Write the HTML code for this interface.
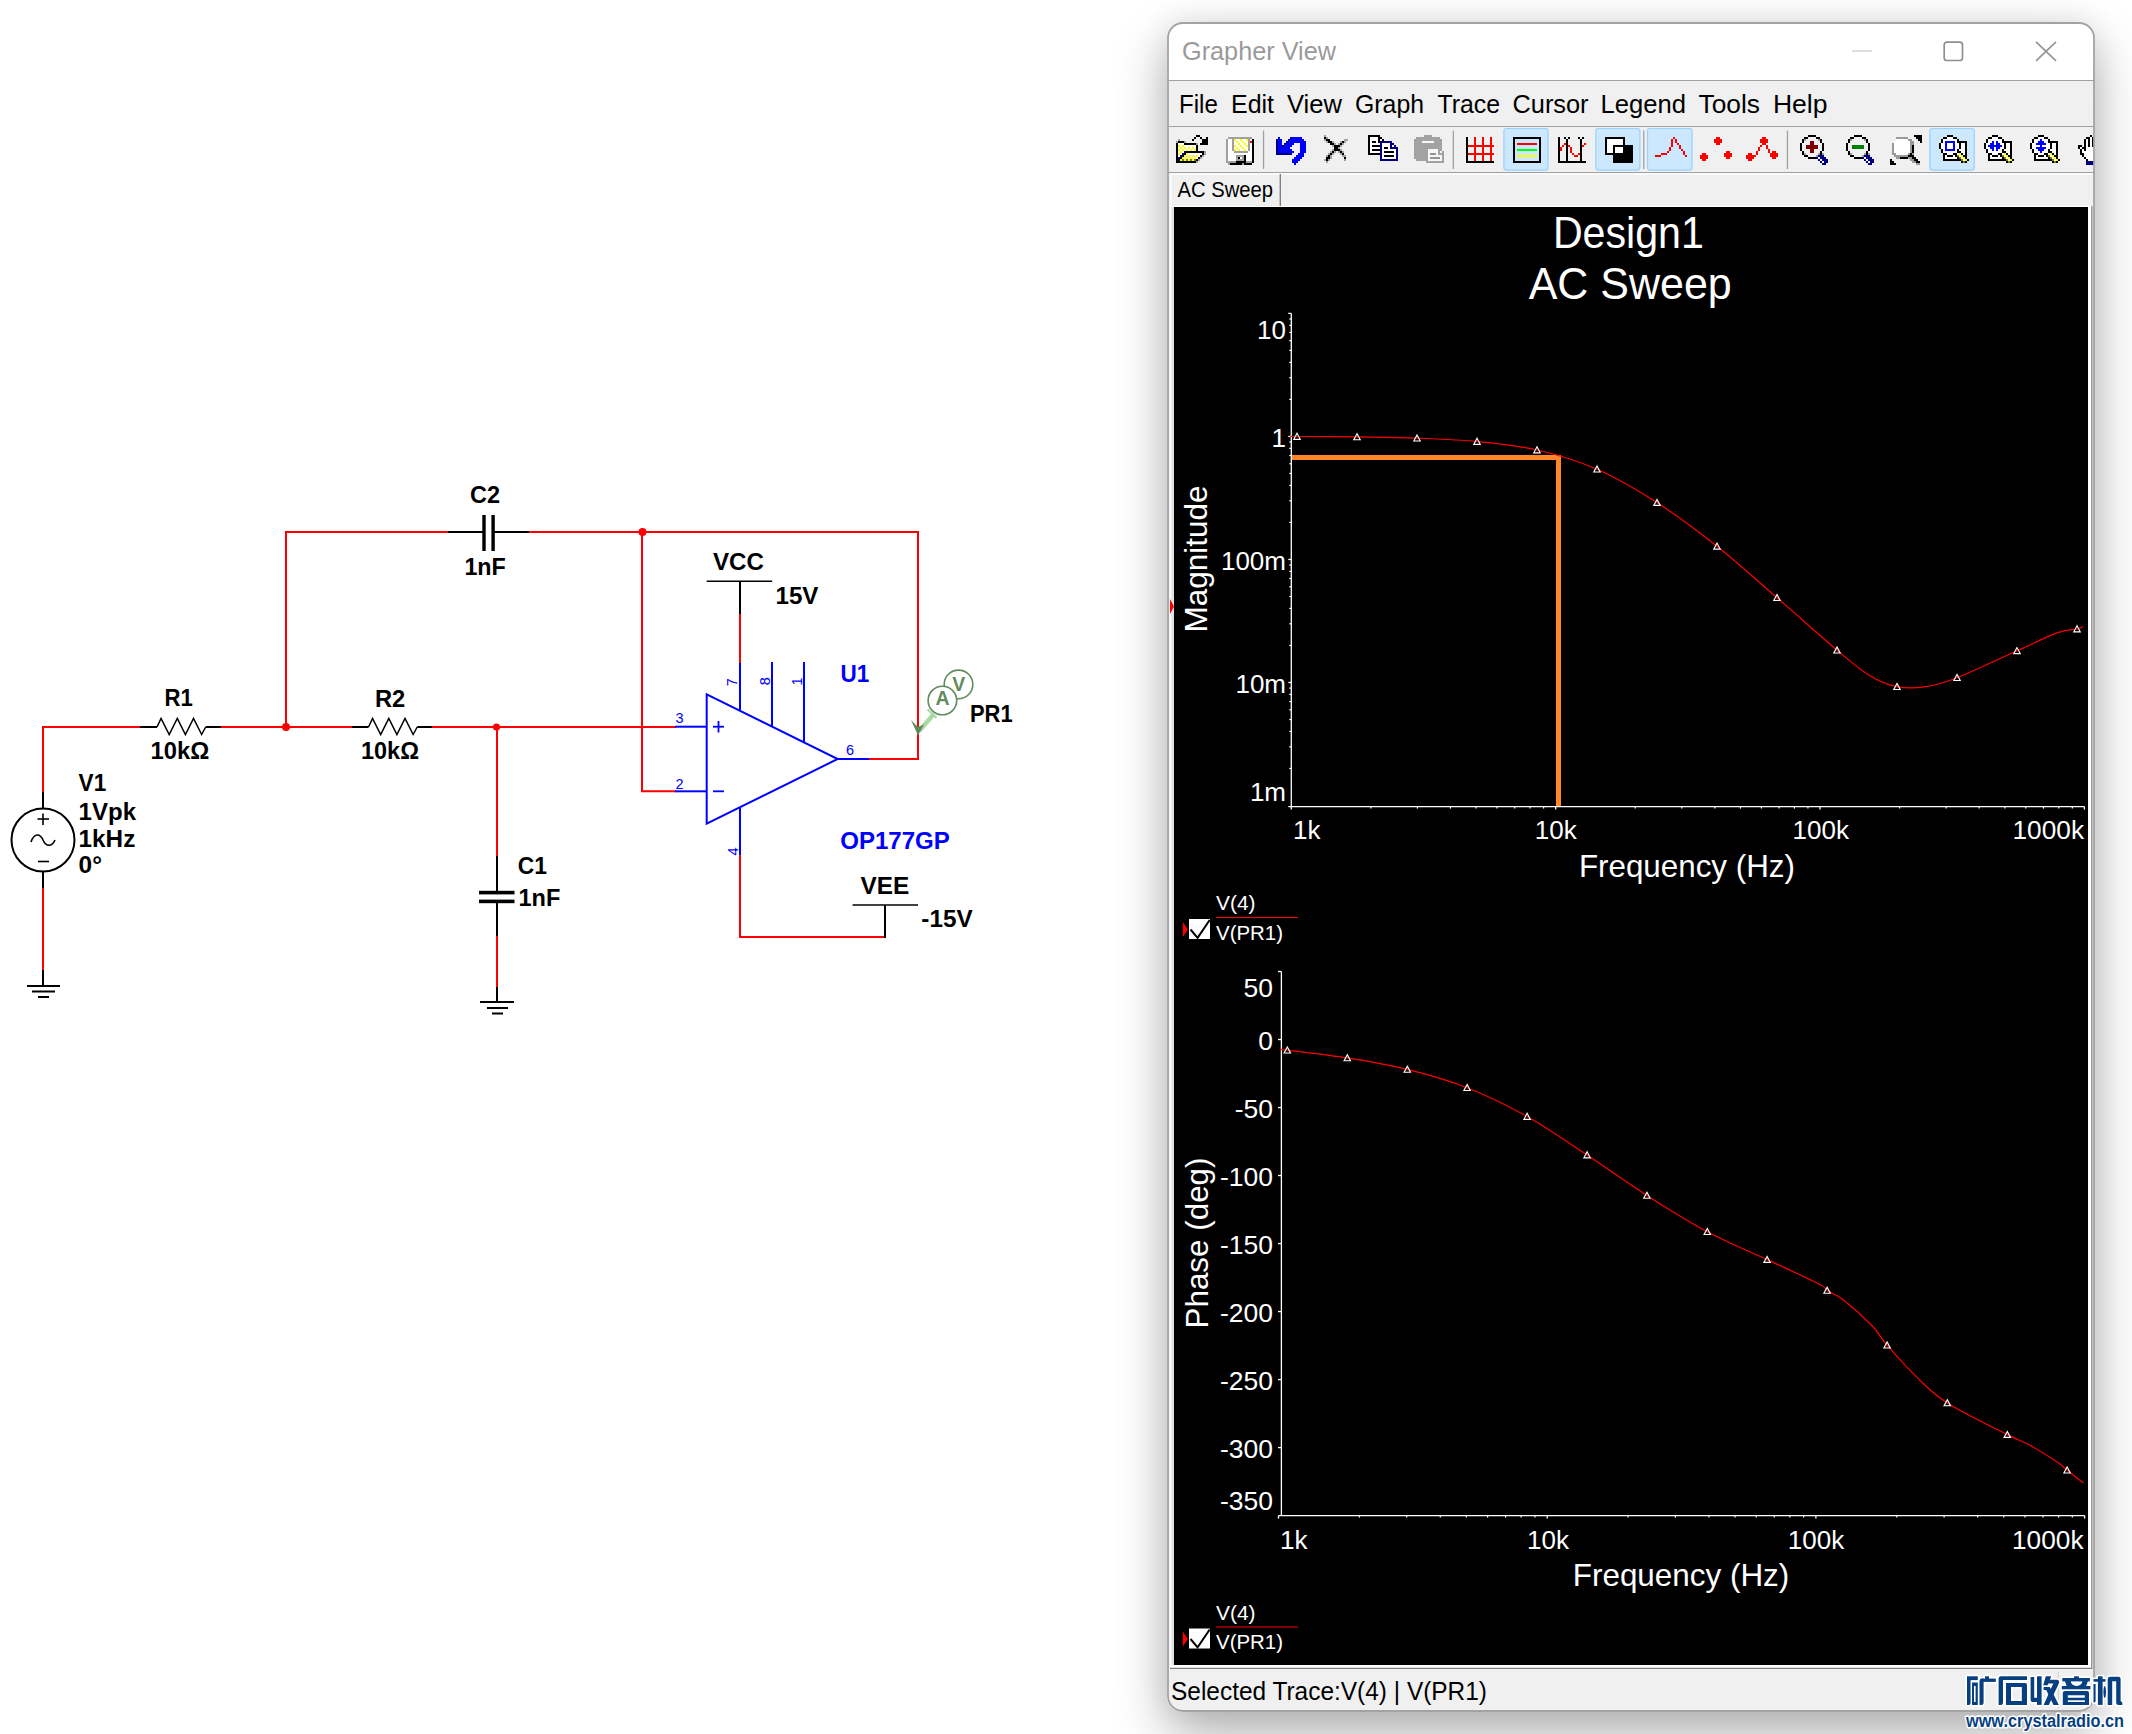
<!DOCTYPE html>
<html><head><meta charset="utf-8"><style>
html,body{margin:0;padding:0;background:#fff;width:2132px;height:1734px;overflow:hidden}
#win{position:absolute;left:1167px;top:22px;width:928px;height:1690px;border-radius:15px;box-shadow:0 22px 52px rgba(0,0,0,0.30),0 0 30px rgba(0,0,0,0.08);background:#f0f0f0}
svg{position:absolute;left:0;top:0}
</style></head><body>
<div id="win"></div>
<svg width="2132" height="1734" viewBox="0 0 2132 1734" shape-rendering="auto">
<g><polyline points="43,793 43,727 141,727" stroke="#ff0000" stroke-width="2" fill="none" />
<line x1="43" y1="792" x2="43" y2="808" stroke="#000" stroke-width="2" />
<circle cx="43" cy="840" r="31.5" fill="none" stroke="#000" stroke-width="2"/>
<line x1="43" y1="872" x2="43" y2="889" stroke="#000" stroke-width="2" />
<line x1="43" y1="888" x2="43" y2="971" stroke="#ff0000" stroke-width="2" />
<line x1="43" y1="970" x2="43" y2="987" stroke="#000" stroke-width="2" />
<line x1="27" y1="986" x2="60" y2="986" stroke="#000" stroke-width="2" />
<line x1="32" y1="991.5" x2="55" y2="991.5" stroke="#000" stroke-width="2" />
<line x1="38" y1="997" x2="49" y2="997" stroke="#000" stroke-width="2" />
<line x1="37.5" y1="819" x2="49" y2="819" stroke="#000" stroke-width="1.6" />
<line x1="43" y1="813.5" x2="43" y2="825" stroke="#000" stroke-width="1.6" />
<line x1="38" y1="861.5" x2="49" y2="861.5" stroke="#000" stroke-width="1.6" />
<path d="M31,842 C34,833 40,833 43,840 C46,847 52,847 55,840" fill="none" stroke="#000" stroke-width="1.6"/>
<line x1="140" y1="727" x2="157" y2="727" stroke="#000" stroke-width="2" />
<polyline points="157,727 161.05833333333334,718.5 169.175,734.5 177.29166666666666,718.5 185.40833333333333,734.5 193.525,718.5 201.64166666666665,734.5 205.7,727" stroke="#000" stroke-width="1.5" fill="none" stroke-linejoin="miter"/>
<line x1="205.7" y1="727" x2="221" y2="727" stroke="#000" stroke-width="2" />
<line x1="351.5" y1="727" x2="368.5" y2="727" stroke="#000" stroke-width="2" />
<polyline points="368.5,727 372.55833333333334,718.5 380.675,734.5 388.7916666666667,718.5 396.90833333333336,734.5 405.025,718.5 413.14166666666665,734.5 417.2,727" stroke="#000" stroke-width="1.5" fill="none" stroke-linejoin="miter"/>
<line x1="417.2" y1="727" x2="432.5" y2="727" stroke="#000" stroke-width="2" />
<line x1="221" y1="727" x2="352" y2="727" stroke="#ff0000" stroke-width="2" />
<line x1="432" y1="727" x2="676" y2="727" stroke="#ff0000" stroke-width="2" />
<polyline points="286,727 286,532 449,532" stroke="#ff0000" stroke-width="2" fill="none" />
<line x1="448" y1="532" x2="483" y2="532" stroke="#000" stroke-width="2" />
<line x1="494" y1="532" x2="530" y2="532" stroke="#000" stroke-width="2" />
<rect x="482.3" y="515" width="3.4" height="36" fill="#000" />
<rect x="491.4" y="515" width="3.4" height="36" fill="#000" />
<polyline points="529,532 918,532 918,759 869,759" stroke="#ff0000" stroke-width="2" fill="none" />
<polyline points="642,532 642,791.3 676,791.3" stroke="#ff0000" stroke-width="2" fill="none" />
<line x1="497" y1="727" x2="497" y2="857" stroke="#ff0000" stroke-width="2" />
<line x1="497" y1="856" x2="497" y2="893" stroke="#000" stroke-width="2" />
<line x1="497" y1="900" x2="497" y2="937" stroke="#000" stroke-width="2" />
<rect x="479" y="890.8" width="35.5" height="3.6" fill="#000" />
<rect x="479" y="899.6" width="35.5" height="3.6" fill="#000" />
<line x1="497" y1="936" x2="497" y2="988" stroke="#ff0000" stroke-width="2" />
<line x1="497" y1="987" x2="497" y2="1002" stroke="#000" stroke-width="2" />
<line x1="480" y1="1002" x2="514" y2="1002" stroke="#000" stroke-width="2" />
<line x1="487" y1="1008" x2="508" y2="1008" stroke="#000" stroke-width="2" />
<line x1="492" y1="1013.5" x2="503" y2="1013.5" stroke="#000" stroke-width="2" />
<circle cx="286" cy="727" r="4" fill="#ff0000"/>
<circle cx="496.5" cy="727" r="3.6" fill="#ff0000"/>
<circle cx="642.5" cy="532" r="4" fill="#ff0000"/>
<polygon points="706.7,694.4 706.7,823.6 837.7,759" fill="none" stroke="#0000ff" stroke-width="2"/>
<line x1="675" y1="726.7" x2="706.7" y2="726.7" stroke="#0000ff" stroke-width="2" />
<line x1="675" y1="791.3" x2="706.7" y2="791.3" stroke="#0000ff" stroke-width="2" />
<line x1="837" y1="759" x2="869" y2="759" stroke="#0000ff" stroke-width="2" />
<line x1="740" y1="662" x2="740" y2="710.8212213740458" stroke="#0000ff" stroke-width="2" />
<line x1="772" y1="662" x2="772" y2="726.6013740458015" stroke="#0000ff" stroke-width="2" />
<line x1="804" y1="662" x2="804" y2="742.3815267175572" stroke="#0000ff" stroke-width="2" />
<line x1="740" y1="807.1787786259542" x2="740" y2="856" stroke="#0000ff" stroke-width="2" />
<line x1="740" y1="613" x2="740" y2="663" stroke="#ff0000" stroke-width="2" />
<line x1="740" y1="581" x2="740" y2="614" stroke="#000" stroke-width="2" />
<line x1="706.7" y1="581.3" x2="772.2" y2="581.3" stroke="#000" stroke-width="1.5" />
<polyline points="740,855 740,937 886,937" stroke="#ff0000" stroke-width="2" fill="none" />
<line x1="885" y1="938" x2="885" y2="905" stroke="#000" stroke-width="2" />
<line x1="852.6" y1="905" x2="918" y2="905" stroke="#000" stroke-width="1.5" />
<line x1="713" y1="726.7" x2="724" y2="726.7" stroke="#0000ff" stroke-width="1.8" />
<line x1="718.5" y1="721" x2="718.5" y2="732.5" stroke="#0000ff" stroke-width="1.8" />
<line x1="713" y1="791.3" x2="724" y2="791.3" stroke="#0000ff" stroke-width="1.8" />
<line x1="919" y1="731" x2="934" y2="714" stroke="#a9d8a3" stroke-width="4.5"/>
<line x1="927.5" y1="709.5" x2="936.5" y2="718" stroke="#a9d8a3" stroke-width="2"/>
<polygon points="911,720 918,735.5 924,724.5 918,727" fill="#5f8c5f"/>
<circle cx="958.5" cy="684.4" r="14.3" fill="#fff" stroke="#5f8c5f" stroke-width="1.6"/>
<circle cx="942.4" cy="700.5" r="14.3" fill="#fff" stroke="#5f8c5f" stroke-width="1.6"/>
<text x="958.7" y="691.2" font-family="Liberation Sans" font-size="19.5" font-weight="bold" fill="#5f8c5f" text-anchor="middle" >V</text>
<text x="942.6" y="705.2" font-family="Liberation Sans" font-size="19.5" font-weight="bold" fill="#5f8c5f" text-anchor="middle" >A</text>
<text x="470" y="503.2" font-family="Liberation Sans" font-size="23" font-weight="bold" fill="#000" text-anchor="start" textLength="30" lengthAdjust="spacingAndGlyphs" >C2</text>
<text x="464.4" y="575" font-family="Liberation Sans" font-size="23" font-weight="bold" fill="#000" text-anchor="start" textLength="41.4" lengthAdjust="spacingAndGlyphs" >1nF</text>
<text x="164.4" y="706.3" font-family="Liberation Sans" font-size="23" font-weight="bold" fill="#000" text-anchor="start" textLength="28.3" lengthAdjust="spacingAndGlyphs" >R1</text>
<text x="150.6" y="758.9" font-family="Liberation Sans" font-size="23" font-weight="bold" fill="#000" text-anchor="start" textLength="58.7" lengthAdjust="spacingAndGlyphs" >10kΩ</text>
<text x="375" y="707" font-family="Liberation Sans" font-size="23" font-weight="bold" fill="#000" text-anchor="start" textLength="30.3" lengthAdjust="spacingAndGlyphs" >R2</text>
<text x="361" y="759.2" font-family="Liberation Sans" font-size="23" font-weight="bold" fill="#000" text-anchor="start" textLength="58" lengthAdjust="spacingAndGlyphs" >10kΩ</text>
<text x="78.6" y="790.7" font-family="Liberation Sans" font-size="23" font-weight="bold" fill="#000" text-anchor="start" textLength="27.6" lengthAdjust="spacingAndGlyphs" >V1</text>
<text x="78.6" y="819.8" font-family="Liberation Sans" font-size="23" font-weight="bold" fill="#000" text-anchor="start" textLength="57.4" lengthAdjust="spacingAndGlyphs" >1Vpk</text>
<text x="78.6" y="846.8" font-family="Liberation Sans" font-size="23" font-weight="bold" fill="#000" text-anchor="start" textLength="56.7" lengthAdjust="spacingAndGlyphs" >1kHz</text>
<text x="78.6" y="873" font-family="Liberation Sans" font-size="23" font-weight="bold" fill="#000" text-anchor="start" textLength="23.4" lengthAdjust="spacingAndGlyphs" >0°</text>
<text x="713" y="569.8" font-family="Liberation Sans" font-size="23" font-weight="bold" fill="#000" text-anchor="start" textLength="51" lengthAdjust="spacingAndGlyphs" >VCC</text>
<text x="775.5" y="604" font-family="Liberation Sans" font-size="23" font-weight="bold" fill="#000" text-anchor="start" textLength="43" lengthAdjust="spacingAndGlyphs" >15V</text>
<text x="517.8" y="873.5" font-family="Liberation Sans" font-size="23" font-weight="bold" fill="#000" text-anchor="start" textLength="29.2" lengthAdjust="spacingAndGlyphs" >C1</text>
<text x="518.5" y="906.4" font-family="Liberation Sans" font-size="23" font-weight="bold" fill="#000" text-anchor="start" textLength="41.8" lengthAdjust="spacingAndGlyphs" >1nF</text>
<text x="860.5" y="893.7" font-family="Liberation Sans" font-size="23" font-weight="bold" fill="#000" text-anchor="start" textLength="48.8" lengthAdjust="spacingAndGlyphs" >VEE</text>
<text x="921.3" y="927.2" font-family="Liberation Sans" font-size="23" font-weight="bold" fill="#000" text-anchor="start" textLength="51.3" lengthAdjust="spacingAndGlyphs" >-15V</text>
<text x="970" y="721.9" font-family="Liberation Sans" font-size="23" font-weight="bold" fill="#000" text-anchor="start" textLength="42.6" lengthAdjust="spacingAndGlyphs" >PR1</text>
<text x="840.4" y="682.4" font-family="Liberation Sans" font-size="23" font-weight="bold" fill="#0000ff" text-anchor="start" textLength="28.8" lengthAdjust="spacingAndGlyphs" >U1</text>
<text x="840.2" y="848.6" font-family="Liberation Sans" font-size="23" font-weight="bold" fill="#0000ff" text-anchor="start" textLength="109.7" lengthAdjust="spacingAndGlyphs" >OP177GP</text>
<text x="675.5" y="723.4" font-family="Liberation Sans" font-size="14.5" font-weight="normal" fill="#0000ff" text-anchor="start" >3</text>
<text x="675.5" y="788.5" font-family="Liberation Sans" font-size="14.5" font-weight="normal" fill="#0000ff" text-anchor="start" >2</text>
<text x="846" y="755" font-family="Liberation Sans" font-size="14.5" font-weight="normal" fill="#0000ff" text-anchor="start" >6</text>
<text x="0" y="0" font-family="Liberation Sans" font-size="14.5" fill="#0000ff" transform="translate(737,686.3) rotate(-90)">7</text>
<text x="0" y="0" font-family="Liberation Sans" font-size="14.5" fill="#0000ff" transform="translate(769.5,685.3) rotate(-90)">8</text>
<text x="0" y="0" font-family="Liberation Sans" font-size="14.5" fill="#0000ff" transform="translate(801.8,685.5) rotate(-90)">1</text>
<text x="0" y="0" font-family="Liberation Sans" font-size="14.5" fill="#0000ff" transform="translate(737.5,855.5) rotate(-90)">4</text></g>
<defs><clipPath id="wc"><rect x="1168" y="23" width="926" height="1688" rx="15"/></clipPath></defs>
<g clip-path="url(#wc)"><rect x="1168" y="23" width="926" height="57" fill="#ffffff" />
<rect x="1168" y="80" width="926" height="1630" fill="#f0f0f0" />
<line x1="1168" y1="80.5" x2="2094" y2="80.5" stroke="#a0a0a0" stroke-width="1" />
<text x="1182" y="59.8" font-family="Liberation Sans" font-size="25" font-weight="normal" fill="#9a9a9a" text-anchor="start" textLength="154" lengthAdjust="spacingAndGlyphs" >Grapher View</text>
<line x1="1852" y1="51" x2="1872" y2="51" stroke="#d4d4d4" stroke-width="1.4" />
<rect x="1944.2" y="42.2" width="18.3" height="18.3" rx="2.8" fill="none" stroke="#909090" stroke-width="1.7"/>
<line x1="2036" y1="41.8" x2="2056" y2="60.8" stroke="#959595" stroke-width="1.7" />
<line x1="2056" y1="41.8" x2="2036" y2="60.8" stroke="#959595" stroke-width="1.7" />
<text x="1179" y="113.3" font-family="Liberation Sans" font-size="26" font-weight="normal" fill="#000" text-anchor="start" textLength="38.8" lengthAdjust="spacingAndGlyphs" >File</text>
<text x="1231" y="113.3" font-family="Liberation Sans" font-size="26" font-weight="normal" fill="#000" text-anchor="start" textLength="43" lengthAdjust="spacingAndGlyphs" >Edit</text>
<text x="1287" y="113.3" font-family="Liberation Sans" font-size="26" font-weight="normal" fill="#000" text-anchor="start" textLength="55" lengthAdjust="spacingAndGlyphs" >View</text>
<text x="1355" y="113.3" font-family="Liberation Sans" font-size="26" font-weight="normal" fill="#000" text-anchor="start" textLength="69" lengthAdjust="spacingAndGlyphs" >Graph</text>
<text x="1437.5" y="113.3" font-family="Liberation Sans" font-size="26" font-weight="normal" fill="#000" text-anchor="start" textLength="62.5" lengthAdjust="spacingAndGlyphs" >Trace</text>
<text x="1512.5" y="113.3" font-family="Liberation Sans" font-size="26" font-weight="normal" fill="#000" text-anchor="start" textLength="76" lengthAdjust="spacingAndGlyphs" >Cursor</text>
<text x="1600.5" y="113.3" font-family="Liberation Sans" font-size="26" font-weight="normal" fill="#000" text-anchor="start" textLength="85.5" lengthAdjust="spacingAndGlyphs" >Legend</text>
<text x="1698.5" y="113.3" font-family="Liberation Sans" font-size="26" font-weight="normal" fill="#000" text-anchor="start" textLength="61.4" lengthAdjust="spacingAndGlyphs" >Tools</text>
<text x="1772.9" y="113.3" font-family="Liberation Sans" font-size="26" font-weight="normal" fill="#000" text-anchor="start" textLength="54.6" lengthAdjust="spacingAndGlyphs" >Help</text>
<line x1="1168" y1="126.5" x2="2094" y2="126.5" stroke="#a0a0a0" stroke-width="1" />
<line x1="1168" y1="172.5" x2="2094" y2="172.5" stroke="#a0a0a0" stroke-width="1" />
<line x1="1170" y1="173.8" x2="2092" y2="173.8" stroke="#ffffff" stroke-width="1.2" />
<line x1="1170.8" y1="174" x2="1170.8" y2="207" stroke="#ffffff" stroke-width="1.2" />
<line x1="1280.3" y1="174" x2="1280.3" y2="206" stroke="#808080" stroke-width="1.4" />
<text x="1177.5" y="196.8" font-family="Liberation Sans" font-size="22.5" font-weight="normal" fill="#000" text-anchor="start" textLength="95.5" lengthAdjust="spacingAndGlyphs" >AC Sweep</text>
<rect x="1170" y="206" width="922" height="1462" fill="#ffffff" />
<rect x="1171.3" y="207" width="2.7" height="1458" fill="#e2e2e2" />
<rect x="1174" y="207" width="914" height="1458" fill="#000000" />
<line x1="2091.8" y1="206" x2="2091.8" y2="1669" stroke="#808080" stroke-width="1.2" />
<line x1="1170" y1="1668.3" x2="2092" y2="1668.3" stroke="#808080" stroke-width="1.2" />
<text x="1171" y="1700" font-family="Liberation Sans" font-size="25.8" font-weight="normal" fill="#000" text-anchor="start" textLength="316" lengthAdjust="spacingAndGlyphs" >Selected Trace:V(4) | V(PR1)</text>
<line x1="2058.4" y1="1672" x2="2058.4" y2="1709" stroke="#d2d2d2" stroke-width="1" />
<text x="1628.4" y="248.3" font-family="Liberation Sans" font-size="44" font-weight="normal" fill="#ffffff" text-anchor="middle" textLength="151" lengthAdjust="spacingAndGlyphs" >Design1</text>
<text x="1630.2" y="298.9" font-family="Liberation Sans" font-size="44" font-weight="normal" fill="#ffffff" text-anchor="middle" textLength="203" lengthAdjust="spacingAndGlyphs" >AC Sweep</text>
<line x1="1291.3" y1="313.4" x2="1291.3" y2="809.6" stroke="#ffffff" stroke-width="1.3" />
<line x1="1288.3" y1="806.6" x2="2084.4" y2="806.6" stroke="#ffffff" stroke-width="1.3" />
<line x1="1288.3" y1="313.4" x2="1291.3" y2="313.4" stroke="#ffffff" stroke-width="1.3" />
<line x1="1289.3" y1="399.3942796334603" x2="1291.3" y2="399.3942796334603" stroke="#ffffff" stroke-width="1.2" />
<line x1="1289.3" y1="377.7297720318399" x2="1291.3" y2="377.7297720318399" stroke="#ffffff" stroke-width="1.2" />
<line x1="1289.3" y1="362.35855926692074" x2="1291.3" y2="362.35855926692074" stroke="#ffffff" stroke-width="1.2" />
<line x1="1289.3" y1="350.43572036653956" x2="1291.3" y2="350.43572036653956" stroke="#ffffff" stroke-width="1.2" />
<line x1="1289.3" y1="340.69405166530026" x2="1291.3" y2="340.69405166530026" stroke="#ffffff" stroke-width="1.2" />
<line x1="1289.3" y1="332.45758813704595" x2="1291.3" y2="332.45758813704595" stroke="#ffffff" stroke-width="1.2" />
<line x1="1289.3" y1="325.32283890038116" x2="1291.3" y2="325.32283890038116" stroke="#ffffff" stroke-width="1.2" />
<line x1="1289.3" y1="319.0295440636798" x2="1291.3" y2="319.0295440636798" stroke="#ffffff" stroke-width="1.2" />
<line x1="1288.3" y1="436.42999999999995" x2="1291.3" y2="436.42999999999995" stroke="#ffffff" stroke-width="1.3" />
<line x1="1289.3" y1="522.4242796334604" x2="1291.3" y2="522.4242796334604" stroke="#ffffff" stroke-width="1.2" />
<line x1="1289.3" y1="500.75977203184" x2="1291.3" y2="500.75977203184" stroke="#ffffff" stroke-width="1.2" />
<line x1="1289.3" y1="485.3885592669208" x2="1291.3" y2="485.3885592669208" stroke="#ffffff" stroke-width="1.2" />
<line x1="1289.3" y1="473.46572036653964" x2="1291.3" y2="473.46572036653964" stroke="#ffffff" stroke-width="1.2" />
<line x1="1289.3" y1="463.72405166530035" x2="1291.3" y2="463.72405166530035" stroke="#ffffff" stroke-width="1.2" />
<line x1="1289.3" y1="455.48758813704603" x2="1291.3" y2="455.48758813704603" stroke="#ffffff" stroke-width="1.2" />
<line x1="1289.3" y1="448.35283890038124" x2="1291.3" y2="448.35283890038124" stroke="#ffffff" stroke-width="1.2" />
<line x1="1289.3" y1="442.0595440636799" x2="1291.3" y2="442.0595440636799" stroke="#ffffff" stroke-width="1.2" />
<line x1="1288.3" y1="559.46" x2="1291.3" y2="559.46" stroke="#ffffff" stroke-width="1.3" />
<line x1="1289.3" y1="645.4542796334604" x2="1291.3" y2="645.4542796334604" stroke="#ffffff" stroke-width="1.2" />
<line x1="1289.3" y1="623.7897720318399" x2="1291.3" y2="623.7897720318399" stroke="#ffffff" stroke-width="1.2" />
<line x1="1289.3" y1="608.4185592669207" x2="1291.3" y2="608.4185592669207" stroke="#ffffff" stroke-width="1.2" />
<line x1="1289.3" y1="596.4957203665397" x2="1291.3" y2="596.4957203665397" stroke="#ffffff" stroke-width="1.2" />
<line x1="1289.3" y1="586.7540516653004" x2="1291.3" y2="586.7540516653004" stroke="#ffffff" stroke-width="1.2" />
<line x1="1289.3" y1="578.517588137046" x2="1291.3" y2="578.517588137046" stroke="#ffffff" stroke-width="1.2" />
<line x1="1289.3" y1="571.3828389003812" x2="1291.3" y2="571.3828389003812" stroke="#ffffff" stroke-width="1.2" />
<line x1="1289.3" y1="565.0895440636799" x2="1291.3" y2="565.0895440636799" stroke="#ffffff" stroke-width="1.2" />
<line x1="1288.3" y1="682.49" x2="1291.3" y2="682.49" stroke="#ffffff" stroke-width="1.3" />
<line x1="1289.3" y1="768.4842796334603" x2="1291.3" y2="768.4842796334603" stroke="#ffffff" stroke-width="1.2" />
<line x1="1289.3" y1="746.8197720318399" x2="1291.3" y2="746.8197720318399" stroke="#ffffff" stroke-width="1.2" />
<line x1="1289.3" y1="731.4485592669207" x2="1291.3" y2="731.4485592669207" stroke="#ffffff" stroke-width="1.2" />
<line x1="1289.3" y1="719.5257203665396" x2="1291.3" y2="719.5257203665396" stroke="#ffffff" stroke-width="1.2" />
<line x1="1289.3" y1="709.7840516653004" x2="1291.3" y2="709.7840516653004" stroke="#ffffff" stroke-width="1.2" />
<line x1="1289.3" y1="701.547588137046" x2="1291.3" y2="701.547588137046" stroke="#ffffff" stroke-width="1.2" />
<line x1="1289.3" y1="694.4128389003812" x2="1291.3" y2="694.4128389003812" stroke="#ffffff" stroke-width="1.2" />
<line x1="1289.3" y1="688.1195440636799" x2="1291.3" y2="688.1195440636799" stroke="#ffffff" stroke-width="1.2" />
<line x1="1370.8822965203678" y1="806.6" x2="1370.8822965203678" y2="808.6" stroke="#ffffff" stroke-width="1.2" />
<line x1="1417.4349557060548" y1="806.6" x2="1417.4349557060548" y2="808.6" stroke="#ffffff" stroke-width="1.2" />
<line x1="1450.4645930407357" y1="806.6" x2="1450.4645930407357" y2="808.6" stroke="#ffffff" stroke-width="1.2" />
<line x1="1476.0843701462989" y1="806.6" x2="1476.0843701462989" y2="808.6" stroke="#ffffff" stroke-width="1.2" />
<line x1="1497.0172522264227" y1="806.6" x2="1497.0172522264227" y2="808.6" stroke="#ffffff" stroke-width="1.2" />
<line x1="1514.7157518451024" y1="806.6" x2="1514.7157518451024" y2="808.6" stroke="#ffffff" stroke-width="1.2" />
<line x1="1530.0468895611034" y1="806.6" x2="1530.0468895611034" y2="808.6" stroke="#ffffff" stroke-width="1.2" />
<line x1="1543.5699114121096" y1="806.6" x2="1543.5699114121096" y2="808.6" stroke="#ffffff" stroke-width="1.2" />
<line x1="1555.6666666666667" y1="806.6" x2="1555.6666666666667" y2="809.6" stroke="#ffffff" stroke-width="1.3" />
<line x1="1635.2489631870346" y1="806.6" x2="1635.2489631870346" y2="808.6" stroke="#ffffff" stroke-width="1.2" />
<line x1="1681.8016223727216" y1="806.6" x2="1681.8016223727216" y2="808.6" stroke="#ffffff" stroke-width="1.2" />
<line x1="1714.8312597074025" y1="806.6" x2="1714.8312597074025" y2="808.6" stroke="#ffffff" stroke-width="1.2" />
<line x1="1740.4510368129656" y1="806.6" x2="1740.4510368129656" y2="808.6" stroke="#ffffff" stroke-width="1.2" />
<line x1="1761.3839188930895" y1="806.6" x2="1761.3839188930895" y2="808.6" stroke="#ffffff" stroke-width="1.2" />
<line x1="1779.0824185117692" y1="806.6" x2="1779.0824185117692" y2="808.6" stroke="#ffffff" stroke-width="1.2" />
<line x1="1794.4135562277702" y1="806.6" x2="1794.4135562277702" y2="808.6" stroke="#ffffff" stroke-width="1.2" />
<line x1="1807.9365780787764" y1="806.6" x2="1807.9365780787764" y2="808.6" stroke="#ffffff" stroke-width="1.2" />
<line x1="1820.0333333333333" y1="806.6" x2="1820.0333333333333" y2="809.6" stroke="#ffffff" stroke-width="1.3" />
<line x1="1899.6156298537012" y1="806.6" x2="1899.6156298537012" y2="808.6" stroke="#ffffff" stroke-width="1.2" />
<line x1="1946.1682890393881" y1="806.6" x2="1946.1682890393881" y2="808.6" stroke="#ffffff" stroke-width="1.2" />
<line x1="1979.197926374069" y1="806.6" x2="1979.197926374069" y2="808.6" stroke="#ffffff" stroke-width="1.2" />
<line x1="2004.8177034796322" y1="806.6" x2="2004.8177034796322" y2="808.6" stroke="#ffffff" stroke-width="1.2" />
<line x1="2025.750585559756" y1="806.6" x2="2025.750585559756" y2="808.6" stroke="#ffffff" stroke-width="1.2" />
<line x1="2043.4490851784358" y1="806.6" x2="2043.4490851784358" y2="808.6" stroke="#ffffff" stroke-width="1.2" />
<line x1="2058.780222894437" y1="806.6" x2="2058.780222894437" y2="808.6" stroke="#ffffff" stroke-width="1.2" />
<line x1="2072.303244745443" y1="806.6" x2="2072.303244745443" y2="808.6" stroke="#ffffff" stroke-width="1.2" />
<line x1="2084.4" y1="806.6" x2="2084.4" y2="809.6" stroke="#ffffff" stroke-width="1.3" />
<text x="1286" y="338.7" font-family="Liberation Sans" font-size="26" font-weight="normal" fill="#ffffff" text-anchor="end" >10</text>
<text x="1286" y="446.7" font-family="Liberation Sans" font-size="26" font-weight="normal" fill="#ffffff" text-anchor="end" >1</text>
<text x="1286" y="569.5" font-family="Liberation Sans" font-size="26" font-weight="normal" fill="#ffffff" text-anchor="end" >100m</text>
<text x="1286" y="692.9" font-family="Liberation Sans" font-size="26" font-weight="normal" fill="#ffffff" text-anchor="end" >10m</text>
<text x="1286" y="800.7" font-family="Liberation Sans" font-size="26" font-weight="normal" fill="#ffffff" text-anchor="end" >1m</text>
<text x="1293" y="838.8" font-family="Liberation Sans" font-size="26" font-weight="normal" fill="#ffffff" text-anchor="start" >1k</text>
<text x="1555.8" y="838.8" font-family="Liberation Sans" font-size="26" font-weight="normal" fill="#ffffff" text-anchor="middle" >10k</text>
<text x="1820.8" y="838.8" font-family="Liberation Sans" font-size="26" font-weight="normal" fill="#ffffff" text-anchor="middle" >100k</text>
<text x="2084" y="838.8" font-family="Liberation Sans" font-size="26" font-weight="normal" fill="#ffffff" text-anchor="end" textLength="71.5" lengthAdjust="spacingAndGlyphs" >1000k</text>
<text x="1686.9" y="876.8" font-family="Liberation Sans" font-size="31.5" font-weight="normal" fill="#ffffff" text-anchor="middle" textLength="216" lengthAdjust="spacingAndGlyphs" >Frequency (Hz)</text>
<text x="0" y="0" font-family="Liberation Sans" font-size="32" fill="#ffffff" text-anchor="middle" textLength="147" lengthAdjust="spacingAndGlyphs" transform="translate(1207,559) rotate(-90)">Magnitude</text>
<rect x="1292" y="455" width="268" height="5" fill="#ff8629" />
<rect x="1556" y="455" width="5" height="351" fill="#ff8629" />
<path d="M1292,436.5 C1292.83,436.50 1286.17,436.43 1297,436.5 C1307.83,436.57 1337.00,436.62 1357,436.9 C1377.00,437.18 1397.00,437.43 1417,438.2 C1437.00,438.97 1457.00,439.53 1477,441.5 C1497.00,443.47 1517.00,445.38 1537,450 C1557.00,454.62 1577.00,460.43 1597,469.2 C1617.00,477.97 1637.00,489.75 1657,502.6 C1677.00,515.45 1697.00,530.45 1717,546.3 C1737.00,562.15 1757.00,580.38 1777,597.7 C1797.00,615.02 1821.67,637.28 1837,650.2 C1852.33,663.12 1859.00,669.12 1869,675.2 C1879.00,681.28 1887.50,684.78 1897,686.7 C1906.50,688.62 1916.00,688.20 1926,686.7 C1936.00,685.20 1941.83,683.68 1957,677.7 C1972.17,671.72 2000.33,658.27 2017,650.8 C2033.67,643.33 2047.00,636.53 2057,632.9 C2067.00,629.27 2072.67,630.07 2077,629 C2081.33,627.93 2082.00,626.92 2083,626.5" fill="none" stroke="#ff0000" stroke-width="1.2"/>
<polygon points="1297,433.3 1293.8,439.3 1300.2,439.3" fill="none" stroke="#fff" stroke-width="1.15"/>
<polygon points="1357,433.7 1353.8,439.7 1360.2,439.7" fill="none" stroke="#fff" stroke-width="1.15"/>
<polygon points="1417,435.0 1413.8,441.0 1420.2,441.0" fill="none" stroke="#fff" stroke-width="1.15"/>
<polygon points="1477,438.3 1473.8,444.3 1480.2,444.3" fill="none" stroke="#fff" stroke-width="1.15"/>
<polygon points="1537,446.8 1533.8,452.8 1540.2,452.8" fill="none" stroke="#fff" stroke-width="1.15"/>
<polygon points="1597,466.0 1593.8,472.0 1600.2,472.0" fill="none" stroke="#fff" stroke-width="1.15"/>
<polygon points="1657,499.40000000000003 1653.8,505.40000000000003 1660.2,505.40000000000003" fill="none" stroke="#fff" stroke-width="1.15"/>
<polygon points="1717,543.0999999999999 1713.8,549.0999999999999 1720.2,549.0999999999999" fill="none" stroke="#fff" stroke-width="1.15"/>
<polygon points="1777,594.5 1773.8,600.5 1780.2,600.5" fill="none" stroke="#fff" stroke-width="1.15"/>
<polygon points="1837,647.0 1833.8,653.0 1840.2,653.0" fill="none" stroke="#fff" stroke-width="1.15"/>
<polygon points="1897,683.5 1893.8,689.5 1900.2,689.5" fill="none" stroke="#fff" stroke-width="1.15"/>
<polygon points="1957,674.5 1953.8,680.5 1960.2,680.5" fill="none" stroke="#fff" stroke-width="1.15"/>
<polygon points="2017,647.5999999999999 2013.8,653.5999999999999 2020.2,653.5999999999999" fill="none" stroke="#fff" stroke-width="1.15"/>
<polygon points="2077,625.8 2073.8,631.8 2080.2,631.8" fill="none" stroke="#fff" stroke-width="1.15"/>
<text x="1216" y="910.2" font-family="Liberation Sans" font-size="21" font-weight="normal" fill="#ffffff" text-anchor="start" textLength="39.5" lengthAdjust="spacingAndGlyphs" >V(4)</text>
<line x1="1216" y1="917.5" x2="1298" y2="917.5" stroke="#ff0000" stroke-width="1.2" />
<rect x="1189" y="919" width="21" height="20" fill="#fff" />
<polyline points="1190.5,929.5 1197.6,937.8 1209.7,920" stroke="#000" stroke-width="2" fill="none" />
<polygon points="1182.8,922 1187.8,929.5 1182.8,937" fill="#ff0000"/>
<text x="1216" y="939.8" font-family="Liberation Sans" font-size="21" font-weight="normal" fill="#ffffff" text-anchor="start" textLength="67" lengthAdjust="spacingAndGlyphs" >V(PR1)</text>
<text x="1216" y="1619.7" font-family="Liberation Sans" font-size="21" font-weight="normal" fill="#ffffff" text-anchor="start" textLength="39.5" lengthAdjust="spacingAndGlyphs" >V(4)</text>
<line x1="1216" y1="1627.0" x2="1298" y2="1627.0" stroke="#ff0000" stroke-width="1.2" />
<rect x="1189" y="1628.5" width="21" height="20" fill="#fff" />
<polyline points="1190.5,1639.0 1197.6,1647.3 1209.7,1629.5" stroke="#000" stroke-width="2" fill="none" />
<polygon points="1182.8,1631.5 1187.8,1639.0 1182.8,1646.5" fill="#ff0000"/>
<text x="1216" y="1649.3" font-family="Liberation Sans" font-size="21" font-weight="normal" fill="#ffffff" text-anchor="start" textLength="67" lengthAdjust="spacingAndGlyphs" >V(PR1)</text>
<polygon points="1170,599 1174,606.5 1170,614" fill="#ff0000"/>
<line x1="1281.4" y1="971.5" x2="1281.4" y2="1515.6" stroke="#ffffff" stroke-width="1.3" />
<line x1="1278.5" y1="1515.6" x2="2084.6" y2="1515.6" stroke="#ffffff" stroke-width="1.3" />
<line x1="1278.5" y1="1515.6" x2="1278.5" y2="1518.6" stroke="#ffffff" stroke-width="1.3" />
<line x1="1278" y1="971.5" x2="1281.4" y2="971.5" stroke="#ffffff" stroke-width="1.3" />
<line x1="1278" y1="1039.5125" x2="1281.4" y2="1039.5125" stroke="#ffffff" stroke-width="1.3" />
<line x1="1278" y1="1107.525" x2="1281.4" y2="1107.525" stroke="#ffffff" stroke-width="1.3" />
<line x1="1278" y1="1175.5375" x2="1281.4" y2="1175.5375" stroke="#ffffff" stroke-width="1.3" />
<line x1="1278" y1="1243.55" x2="1281.4" y2="1243.55" stroke="#ffffff" stroke-width="1.3" />
<line x1="1278" y1="1311.5625" x2="1281.4" y2="1311.5625" stroke="#ffffff" stroke-width="1.3" />
<line x1="1278" y1="1379.5749999999998" x2="1281.4" y2="1379.5749999999998" stroke="#ffffff" stroke-width="1.3" />
<line x1="1278" y1="1447.5874999999999" x2="1281.4" y2="1447.5874999999999" stroke="#ffffff" stroke-width="1.3" />
<line x1="1359.3867598349118" y1="1515.6" x2="1359.3867598349118" y2="1517.6" stroke="#ffffff" stroke-width="1.2" />
<line x1="1406.7024811431734" y1="1515.6" x2="1406.7024811431734" y2="1517.6" stroke="#ffffff" stroke-width="1.2" />
<line x1="1440.2735196698236" y1="1515.6" x2="1440.2735196698236" y2="1517.6" stroke="#ffffff" stroke-width="1.2" />
<line x1="1466.3132401650882" y1="1515.6" x2="1466.3132401650882" y2="1517.6" stroke="#ffffff" stroke-width="1.2" />
<line x1="1487.589240978085" y1="1515.6" x2="1487.589240978085" y2="1517.6" stroke="#ffffff" stroke-width="1.2" />
<line x1="1505.5778433518308" y1="1515.6" x2="1505.5778433518308" y2="1517.6" stroke="#ffffff" stroke-width="1.2" />
<line x1="1521.1602795047352" y1="1515.6" x2="1521.1602795047352" y2="1517.6" stroke="#ffffff" stroke-width="1.2" />
<line x1="1534.9049622863465" y1="1515.6" x2="1534.9049622863465" y2="1517.6" stroke="#ffffff" stroke-width="1.2" />
<line x1="1547.2" y1="1515.6" x2="1547.2" y2="1518.6" stroke="#ffffff" stroke-width="1.3" />
<line x1="1628.0867598349118" y1="1515.6" x2="1628.0867598349118" y2="1517.6" stroke="#ffffff" stroke-width="1.2" />
<line x1="1675.4024811431734" y1="1515.6" x2="1675.4024811431734" y2="1517.6" stroke="#ffffff" stroke-width="1.2" />
<line x1="1708.9735196698234" y1="1515.6" x2="1708.9735196698234" y2="1517.6" stroke="#ffffff" stroke-width="1.2" />
<line x1="1735.0132401650883" y1="1515.6" x2="1735.0132401650883" y2="1517.6" stroke="#ffffff" stroke-width="1.2" />
<line x1="1756.289240978085" y1="1515.6" x2="1756.289240978085" y2="1517.6" stroke="#ffffff" stroke-width="1.2" />
<line x1="1774.2778433518308" y1="1515.6" x2="1774.2778433518308" y2="1517.6" stroke="#ffffff" stroke-width="1.2" />
<line x1="1789.8602795047352" y1="1515.6" x2="1789.8602795047352" y2="1517.6" stroke="#ffffff" stroke-width="1.2" />
<line x1="1803.6049622863466" y1="1515.6" x2="1803.6049622863466" y2="1517.6" stroke="#ffffff" stroke-width="1.2" />
<line x1="1815.9" y1="1515.6" x2="1815.9" y2="1518.6" stroke="#ffffff" stroke-width="1.3" />
<line x1="1896.786759834912" y1="1515.6" x2="1896.786759834912" y2="1517.6" stroke="#ffffff" stroke-width="1.2" />
<line x1="1944.1024811431735" y1="1515.6" x2="1944.1024811431735" y2="1517.6" stroke="#ffffff" stroke-width="1.2" />
<line x1="1977.6735196698237" y1="1515.6" x2="1977.6735196698237" y2="1517.6" stroke="#ffffff" stroke-width="1.2" />
<line x1="2003.7132401650883" y1="1515.6" x2="2003.7132401650883" y2="1517.6" stroke="#ffffff" stroke-width="1.2" />
<line x1="2024.989240978085" y1="1515.6" x2="2024.989240978085" y2="1517.6" stroke="#ffffff" stroke-width="1.2" />
<line x1="2042.9778433518309" y1="1515.6" x2="2042.9778433518309" y2="1517.6" stroke="#ffffff" stroke-width="1.2" />
<line x1="2058.5602795047353" y1="1515.6" x2="2058.5602795047353" y2="1517.6" stroke="#ffffff" stroke-width="1.2" />
<line x1="2072.304962286347" y1="1515.6" x2="2072.304962286347" y2="1517.6" stroke="#ffffff" stroke-width="1.2" />
<line x1="2084.6" y1="1515.6" x2="2084.6" y2="1518.6" stroke="#ffffff" stroke-width="1.3" />
<text x="1273" y="996.7" font-family="Liberation Sans" font-size="26.5" font-weight="normal" fill="#ffffff" text-anchor="end" >50</text>
<text x="1273" y="1050" font-family="Liberation Sans" font-size="26.5" font-weight="normal" fill="#ffffff" text-anchor="end" >0</text>
<text x="1273" y="1117.8" font-family="Liberation Sans" font-size="26.5" font-weight="normal" fill="#ffffff" text-anchor="end" >-50</text>
<text x="1273" y="1185.6" font-family="Liberation Sans" font-size="26.5" font-weight="normal" fill="#ffffff" text-anchor="end" >-100</text>
<text x="1273" y="1253.5" font-family="Liberation Sans" font-size="26.5" font-weight="normal" fill="#ffffff" text-anchor="end" >-150</text>
<text x="1273" y="1321.5" font-family="Liberation Sans" font-size="26.5" font-weight="normal" fill="#ffffff" text-anchor="end" >-200</text>
<text x="1273" y="1389.5" font-family="Liberation Sans" font-size="26.5" font-weight="normal" fill="#ffffff" text-anchor="end" >-250</text>
<text x="1273" y="1457.8" font-family="Liberation Sans" font-size="26.5" font-weight="normal" fill="#ffffff" text-anchor="end" >-300</text>
<text x="1273" y="1509.5" font-family="Liberation Sans" font-size="26.5" font-weight="normal" fill="#ffffff" text-anchor="end" >-350</text>
<text x="1280" y="1548.8" font-family="Liberation Sans" font-size="26" font-weight="normal" fill="#ffffff" text-anchor="start" >1k</text>
<text x="1548" y="1548.8" font-family="Liberation Sans" font-size="26" font-weight="normal" fill="#ffffff" text-anchor="middle" >10k</text>
<text x="1816" y="1548.8" font-family="Liberation Sans" font-size="26" font-weight="normal" fill="#ffffff" text-anchor="middle" >100k</text>
<text x="2083.5" y="1548.8" font-family="Liberation Sans" font-size="26" font-weight="normal" fill="#ffffff" text-anchor="end" textLength="71.5" lengthAdjust="spacingAndGlyphs" >1000k</text>
<text x="1681" y="1586.4" font-family="Liberation Sans" font-size="31.5" font-weight="normal" fill="#ffffff" text-anchor="middle" textLength="216.5" lengthAdjust="spacingAndGlyphs" >Frequency (Hz)</text>
<text x="0" y="0" font-family="Liberation Sans" font-size="32" fill="#ffffff" text-anchor="middle" textLength="171" lengthAdjust="spacingAndGlyphs" transform="translate(1207.5,1243) rotate(-90)">Phase (deg)</text>
<path d="M1281,1049.2 C1282.05,1049.37 1276.25,1048.75 1287.3,1050.2 C1298.35,1051.65 1327.30,1054.70 1347.3,1057.9 C1367.30,1061.10 1387.33,1064.43 1407.3,1069.4 C1427.27,1074.37 1447.13,1079.85 1467.1,1087.7 C1487.07,1095.55 1507.10,1105.28 1527.1,1116.5 C1547.10,1127.72 1567.13,1141.85 1587.1,1155 C1607.07,1168.15 1626.87,1182.62 1646.9,1195.4 C1666.93,1208.18 1687.27,1221.00 1707.3,1231.7 C1727.33,1242.40 1748.57,1250.93 1767.1,1259.6 C1785.63,1268.27 1808.50,1278.57 1818.5,1283.7 C1828.50,1288.83 1822.93,1287.68 1827.1,1290.4 C1831.27,1293.12 1835.97,1294.07 1843.5,1300 C1851.03,1305.93 1865.03,1318.47 1872.3,1326 C1879.57,1333.53 1879.73,1336.72 1887.1,1345.2 C1894.47,1353.68 1906.47,1367.28 1916.5,1376.9 C1926.53,1386.52 1932.17,1393.28 1947.3,1402.9 C1962.43,1412.52 1993.52,1427.55 2007.3,1434.6 C2021.08,1441.65 2021.57,1440.55 2030,1445.2 C2038.43,1449.85 2051.72,1458.33 2057.9,1462.5 C2064.08,1466.67 2062.83,1466.77 2067.1,1470.2 C2071.37,1473.63 2080.77,1480.95 2083.5,1483.1" fill="none" stroke="#ff0000" stroke-width="1.2"/>
<polygon points="1287.3,1047.0 1284.1,1053.0 1290.5,1053.0" fill="none" stroke="#fff" stroke-width="1.15"/>
<polygon points="1347.3,1054.7 1344.1,1060.7 1350.5,1060.7" fill="none" stroke="#fff" stroke-width="1.15"/>
<polygon points="1407.3,1066.2 1404.1,1072.2 1410.5,1072.2" fill="none" stroke="#fff" stroke-width="1.15"/>
<polygon points="1467.1,1084.5 1463.8999999999999,1090.5 1470.3,1090.5" fill="none" stroke="#fff" stroke-width="1.15"/>
<polygon points="1527.1,1113.3 1523.8999999999999,1119.3 1530.3,1119.3" fill="none" stroke="#fff" stroke-width="1.15"/>
<polygon points="1587.1,1151.8 1583.8999999999999,1157.8 1590.3,1157.8" fill="none" stroke="#fff" stroke-width="1.15"/>
<polygon points="1646.9,1192.2 1643.7,1198.2 1650.1000000000001,1198.2" fill="none" stroke="#fff" stroke-width="1.15"/>
<polygon points="1707.3,1228.5 1704.1,1234.5 1710.5,1234.5" fill="none" stroke="#fff" stroke-width="1.15"/>
<polygon points="1767.1,1256.3999999999999 1763.8999999999999,1262.3999999999999 1770.3,1262.3999999999999" fill="none" stroke="#fff" stroke-width="1.15"/>
<polygon points="1827.1,1287.2 1823.8999999999999,1293.2 1830.3,1293.2" fill="none" stroke="#fff" stroke-width="1.15"/>
<polygon points="1887.1,1342.0 1883.8999999999999,1348.0 1890.3,1348.0" fill="none" stroke="#fff" stroke-width="1.15"/>
<polygon points="1947.3,1399.7 1944.1,1405.7 1950.5,1405.7" fill="none" stroke="#fff" stroke-width="1.15"/>
<polygon points="2007.3,1431.3999999999999 2004.1,1437.3999999999999 2010.5,1437.3999999999999" fill="none" stroke="#fff" stroke-width="1.15"/>
<polygon points="2067.1,1467.0 2063.9,1473.0 2070.2999999999997,1473.0" fill="none" stroke="#fff" stroke-width="1.15"/>
<rect x="1503.9" y="128.5" width="44.19999999999982" height="41.6" rx="2.5" fill="#cce8ff" stroke="#99d1ff" stroke-width="1.2"/>
<rect x="1595.8" y="128.5" width="44.100000000000136" height="41.6" rx="2.5" fill="#cce8ff" stroke="#99d1ff" stroke-width="1.2"/>
<rect x="1647.5" y="128.5" width="44.59999999999991" height="41.6" rx="2.5" fill="#cce8ff" stroke="#99d1ff" stroke-width="1.2"/>
<rect x="1929.9" y="128.5" width="44.399999999999864" height="41.6" rx="2.5" fill="#cce8ff" stroke="#99d1ff" stroke-width="1.2"/>
<rect x="1262.9" y="130.5" width="1.3" height="38.5" fill="#a0a0a0"/>
<rect x="1452.7" y="130.5" width="1.3" height="38.5" fill="#a0a0a0"/>
<rect x="1643.1000000000001" y="130.5" width="1.3" height="38.5" fill="#a0a0a0"/>
<rect x="1786.8000000000002" y="130.5" width="1.3" height="38.5" fill="#a0a0a0"/>
<rect x="1196" y="135" width="4" height="2" fill="#000000"/><rect x="1194" y="137" width="2" height="2" fill="#000000"/><rect x="1200" y="137" width="2" height="2" fill="#000000"/><rect x="1206" y="137" width="2" height="2" fill="#000000"/><rect x="1178" y="139" width="2" height="2" fill="#a0a0a0"/><rect x="1192" y="139" width="2" height="2" fill="#000000"/><rect x="1202" y="139" width="6" height="2" fill="#000000"/><rect x="1176" y="141" width="2" height="2" fill="#a0a0a0"/><rect x="1178" y="141" width="6" height="2" fill="#000000"/><rect x="1184" y="141" width="2" height="2" fill="#a0a0a0"/><rect x="1202" y="141" width="6" height="2" fill="#000000"/><rect x="1176" y="143" width="2" height="2" fill="#000000"/><rect x="1178" y="143" width="6" height="2" fill="#ffffff"/><rect x="1184" y="143" width="12" height="2" fill="#000000"/><rect x="1196" y="143" width="2" height="2" fill="#a0a0a0"/><rect x="1200" y="143" width="8" height="2" fill="#000000"/><rect x="1176" y="145" width="2" height="2" fill="#000000"/><rect x="1178" y="145" width="2" height="2" fill="#ffff00"/><rect x="1180" y="145" width="2" height="2" fill="#ffffff"/><rect x="1182" y="145" width="2" height="2" fill="#ffff00"/><rect x="1184" y="145" width="12" height="2" fill="#ffffff"/><rect x="1196" y="145" width="2" height="2" fill="#000000"/><rect x="1176" y="147" width="2" height="2" fill="#000000"/><rect x="1178" y="147" width="2" height="2" fill="#ffffff"/><rect x="1180" y="147" width="2" height="2" fill="#ffff00"/><rect x="1182" y="147" width="2" height="2" fill="#ffffff"/><rect x="1184" y="147" width="2" height="2" fill="#ffff00"/><rect x="1186" y="147" width="2" height="2" fill="#ffffff"/><rect x="1188" y="147" width="2" height="2" fill="#ffff00"/><rect x="1190" y="147" width="2" height="2" fill="#ffffff"/><rect x="1192" y="147" width="2" height="2" fill="#ffff00"/><rect x="1194" y="147" width="2" height="2" fill="#ffffff"/><rect x="1196" y="147" width="2" height="2" fill="#000000"/><rect x="1176" y="149" width="2" height="2" fill="#000000"/><rect x="1178" y="149" width="2" height="2" fill="#ffff00"/><rect x="1180" y="149" width="2" height="2" fill="#ffffff"/><rect x="1182" y="149" width="2" height="2" fill="#ffff00"/><rect x="1184" y="149" width="2" height="2" fill="#ffffff"/><rect x="1186" y="149" width="2" height="2" fill="#ffff00"/><rect x="1188" y="149" width="2" height="2" fill="#ffffff"/><rect x="1190" y="149" width="2" height="2" fill="#ffff00"/><rect x="1192" y="149" width="2" height="2" fill="#ffffff"/><rect x="1194" y="149" width="2" height="2" fill="#ffff00"/><rect x="1196" y="149" width="2" height="2" fill="#000000"/><rect x="1176" y="151" width="2" height="2" fill="#000000"/><rect x="1178" y="151" width="2" height="2" fill="#ffffff"/><rect x="1180" y="151" width="2" height="2" fill="#ffff00"/><rect x="1182" y="151" width="2" height="2" fill="#ffffff"/><rect x="1184" y="151" width="2" height="2" fill="#000080"/><rect x="1186" y="151" width="18" height="2" fill="#000000"/><rect x="1204" y="151" width="2" height="2" fill="#a0a0a0"/><rect x="1176" y="153" width="2" height="2" fill="#000000"/><rect x="1178" y="153" width="2" height="2" fill="#ffff00"/><rect x="1180" y="153" width="2" height="2" fill="#ffffff"/><rect x="1182" y="153" width="2" height="2" fill="#000080"/><rect x="1184" y="153" width="2" height="2" fill="#000000"/><rect x="1186" y="153" width="2" height="2" fill="#ffff00"/><rect x="1188" y="153" width="14" height="2" fill="#ffffff"/><rect x="1202" y="153" width="2" height="2" fill="#000000"/><rect x="1204" y="153" width="2" height="2" fill="#a0a0a0"/><rect x="1176" y="155" width="2" height="2" fill="#000000"/><rect x="1178" y="155" width="2" height="2" fill="#ffffff"/><rect x="1180" y="155" width="2" height="2" fill="#000080"/><rect x="1182" y="155" width="2" height="2" fill="#000000"/><rect x="1184" y="155" width="2" height="2" fill="#ffff00"/><rect x="1186" y="155" width="2" height="2" fill="#e6e6ff"/><rect x="1188" y="155" width="2" height="2" fill="#ffff00"/><rect x="1190" y="155" width="2" height="2" fill="#e6e6ff"/><rect x="1192" y="155" width="2" height="2" fill="#ffff00"/><rect x="1194" y="155" width="2" height="2" fill="#e6e6ff"/><rect x="1196" y="155" width="2" height="2" fill="#ffff00"/><rect x="1198" y="155" width="2" height="2" fill="#ffffff"/><rect x="1200" y="155" width="2" height="2" fill="#000000"/><rect x="1202" y="155" width="2" height="2" fill="#a0a0a0"/><rect x="1176" y="157" width="2" height="2" fill="#000000"/><rect x="1178" y="157" width="2" height="2" fill="#000080"/><rect x="1180" y="157" width="2" height="2" fill="#000000"/><rect x="1182" y="157" width="2" height="2" fill="#ffff00"/><rect x="1184" y="157" width="2" height="2" fill="#e6e6ff"/><rect x="1186" y="157" width="2" height="2" fill="#ffff00"/><rect x="1188" y="157" width="2" height="2" fill="#e6e6ff"/><rect x="1190" y="157" width="2" height="2" fill="#ffff00"/><rect x="1192" y="157" width="2" height="2" fill="#e6e6ff"/><rect x="1194" y="157" width="2" height="2" fill="#ffff00"/><rect x="1196" y="157" width="2" height="2" fill="#ffffff"/><rect x="1198" y="157" width="2" height="2" fill="#000000"/><rect x="1200" y="157" width="2" height="2" fill="#a0a0a0"/><rect x="1176" y="159" width="4" height="2" fill="#000000"/><rect x="1180" y="159" width="2" height="2" fill="#ffff00"/><rect x="1182" y="159" width="2" height="2" fill="#808000"/><rect x="1184" y="159" width="2" height="2" fill="#ffff00"/><rect x="1186" y="159" width="2" height="2" fill="#808000"/><rect x="1188" y="159" width="2" height="2" fill="#ffff00"/><rect x="1190" y="159" width="2" height="2" fill="#808000"/><rect x="1192" y="159" width="2" height="2" fill="#ffff00"/><rect x="1194" y="159" width="2" height="2" fill="#808000"/><rect x="1196" y="159" width="2" height="2" fill="#000000"/><rect x="1198" y="159" width="2" height="2" fill="#a0a0a0"/><rect x="1176" y="161" width="20" height="2" fill="#000000"/><rect x="1196" y="161" width="2" height="2" fill="#a0a0a0"/>
<rect x="1228" y="137" width="24" height="2" fill="#a0a0a0"/><rect x="1226" y="139" width="2" height="2" fill="#a0a0a0"/><rect x="1228" y="139" width="4" height="2" fill="#ffffff"/><rect x="1232" y="139" width="2" height="2" fill="#a0a0a0"/><rect x="1234" y="139" width="2" height="2" fill="#ffff00"/><rect x="1236" y="139" width="4" height="2" fill="#ffffff"/><rect x="1240" y="139" width="2" height="2" fill="#ffff00"/><rect x="1242" y="139" width="4" height="2" fill="#ffffff"/><rect x="1246" y="139" width="2" height="2" fill="#ffff00"/><rect x="1248" y="139" width="2" height="2" fill="#a0a0a0"/><rect x="1250" y="139" width="2" height="2" fill="#ffffff"/><rect x="1252" y="139" width="2" height="2" fill="#000000"/><rect x="1226" y="141" width="2" height="2" fill="#a0a0a0"/><rect x="1228" y="141" width="4" height="2" fill="#ffffff"/><rect x="1232" y="141" width="2" height="2" fill="#a0a0a0"/><rect x="1234" y="141" width="2" height="2" fill="#ffffff"/><rect x="1236" y="141" width="2" height="2" fill="#ffff00"/><rect x="1238" y="141" width="4" height="2" fill="#ffffff"/><rect x="1242" y="141" width="2" height="2" fill="#ffff00"/><rect x="1244" y="141" width="4" height="2" fill="#ffffff"/><rect x="1248" y="141" width="2" height="2" fill="#a0a0a0"/><rect x="1250" y="141" width="2" height="2" fill="#ff0000"/><rect x="1252" y="141" width="2" height="2" fill="#000000"/><rect x="1226" y="143" width="2" height="2" fill="#a0a0a0"/><rect x="1228" y="143" width="4" height="2" fill="#ffffff"/><rect x="1232" y="143" width="2" height="2" fill="#a0a0a0"/><rect x="1234" y="143" width="4" height="2" fill="#ffffff"/><rect x="1238" y="143" width="2" height="2" fill="#ffff00"/><rect x="1240" y="143" width="4" height="2" fill="#ffffff"/><rect x="1244" y="143" width="2" height="2" fill="#ffff00"/><rect x="1246" y="143" width="2" height="2" fill="#ffffff"/><rect x="1248" y="143" width="2" height="2" fill="#a0a0a0"/><rect x="1250" y="143" width="2" height="2" fill="#ffffff"/><rect x="1252" y="143" width="2" height="2" fill="#000000"/><rect x="1226" y="145" width="2" height="2" fill="#a0a0a0"/><rect x="1228" y="145" width="4" height="2" fill="#ffffff"/><rect x="1232" y="145" width="2" height="2" fill="#a0a0a0"/><rect x="1234" y="145" width="2" height="2" fill="#ffff00"/><rect x="1236" y="145" width="4" height="2" fill="#ffffff"/><rect x="1240" y="145" width="2" height="2" fill="#ffff00"/><rect x="1242" y="145" width="4" height="2" fill="#ffffff"/><rect x="1246" y="145" width="2" height="2" fill="#ffff00"/><rect x="1248" y="145" width="2" height="2" fill="#a0a0a0"/><rect x="1250" y="145" width="2" height="2" fill="#ffffff"/><rect x="1252" y="145" width="2" height="2" fill="#000000"/><rect x="1226" y="147" width="2" height="2" fill="#a0a0a0"/><rect x="1228" y="147" width="4" height="2" fill="#ffffff"/><rect x="1232" y="147" width="2" height="2" fill="#a0a0a0"/><rect x="1234" y="147" width="2" height="2" fill="#ffffff"/><rect x="1236" y="147" width="2" height="2" fill="#ffff00"/><rect x="1238" y="147" width="4" height="2" fill="#ffffff"/><rect x="1242" y="147" width="2" height="2" fill="#ffff00"/><rect x="1244" y="147" width="4" height="2" fill="#ffffff"/><rect x="1248" y="147" width="2" height="2" fill="#a0a0a0"/><rect x="1250" y="147" width="2" height="2" fill="#ffffff"/><rect x="1252" y="147" width="2" height="2" fill="#000000"/><rect x="1226" y="149" width="2" height="2" fill="#a0a0a0"/><rect x="1228" y="149" width="4" height="2" fill="#ffffff"/><rect x="1232" y="149" width="2" height="2" fill="#a0a0a0"/><rect x="1234" y="149" width="2" height="2" fill="#ffff00"/><rect x="1236" y="149" width="2" height="2" fill="#ffffff"/><rect x="1238" y="149" width="2" height="2" fill="#ffff00"/><rect x="1240" y="149" width="4" height="2" fill="#ffffff"/><rect x="1244" y="149" width="2" height="2" fill="#ffff00"/><rect x="1246" y="149" width="2" height="2" fill="#ffffff"/><rect x="1248" y="149" width="2" height="2" fill="#a0a0a0"/><rect x="1250" y="149" width="2" height="2" fill="#ffffff"/><rect x="1252" y="149" width="2" height="2" fill="#000000"/><rect x="1226" y="151" width="2" height="2" fill="#a0a0a0"/><rect x="1228" y="151" width="6" height="2" fill="#ffffff"/><rect x="1234" y="151" width="14" height="2" fill="#a0a0a0"/><rect x="1248" y="151" width="4" height="2" fill="#ffffff"/><rect x="1252" y="151" width="2" height="2" fill="#000000"/><rect x="1226" y="153" width="2" height="2" fill="#a0a0a0"/><rect x="1228" y="153" width="24" height="2" fill="#ffffff"/><rect x="1252" y="153" width="2" height="2" fill="#000000"/><rect x="1226" y="155" width="2" height="2" fill="#a0a0a0"/><rect x="1228" y="155" width="8" height="2" fill="#ffffff"/><rect x="1236" y="155" width="8" height="2" fill="#a0a0a0"/><rect x="1244" y="155" width="2" height="2" fill="#000000"/><rect x="1246" y="155" width="6" height="2" fill="#ffffff"/><rect x="1252" y="155" width="2" height="2" fill="#000000"/><rect x="1226" y="157" width="2" height="2" fill="#a0a0a0"/><rect x="1228" y="157" width="8" height="2" fill="#ffffff"/><rect x="1236" y="157" width="2" height="2" fill="#a0a0a0"/><rect x="1238" y="157" width="2" height="2" fill="#000000"/><rect x="1240" y="157" width="2" height="2" fill="#ffffff"/><rect x="1242" y="157" width="2" height="2" fill="#a0a0a0"/><rect x="1244" y="157" width="2" height="2" fill="#000000"/><rect x="1246" y="157" width="6" height="2" fill="#ffffff"/><rect x="1252" y="157" width="2" height="2" fill="#000000"/><rect x="1226" y="159" width="2" height="2" fill="#a0a0a0"/><rect x="1228" y="159" width="8" height="2" fill="#ffffff"/><rect x="1236" y="159" width="8" height="2" fill="#a0a0a0"/><rect x="1244" y="159" width="2" height="2" fill="#000000"/><rect x="1246" y="159" width="6" height="2" fill="#ffffff"/><rect x="1252" y="159" width="2" height="2" fill="#000000"/><rect x="1226" y="161" width="10" height="2" fill="#a0a0a0"/><rect x="1236" y="161" width="10" height="2" fill="#000000"/><rect x="1246" y="161" width="6" height="2" fill="#a0a0a0"/><rect x="1252" y="161" width="2" height="2" fill="#000000"/><rect x="1228" y="163" width="2" height="2" fill="#a0a0a0"/><rect x="1230" y="163" width="12" height="2" fill="#000000"/><rect x="1242" y="163" width="2" height="2" fill="#a0a0a0"/><rect x="1244" y="163" width="8" height="2" fill="#000000"/>
<rect x="1278" y="137" width="2" height="2" fill="#0000ff"/><rect x="1290" y="137" width="2" height="2" fill="#000080"/><rect x="1292" y="137" width="10" height="2" fill="#0000ff"/><rect x="1276" y="139" width="2" height="2" fill="#000080"/><rect x="1278" y="139" width="4" height="2" fill="#0000ff"/><rect x="1288" y="139" width="2" height="2" fill="#000080"/><rect x="1290" y="139" width="14" height="2" fill="#0000ff"/><rect x="1276" y="141" width="2" height="2" fill="#000080"/><rect x="1278" y="141" width="4" height="2" fill="#0000ff"/><rect x="1286" y="141" width="2" height="2" fill="#000080"/><rect x="1288" y="141" width="18" height="2" fill="#0000ff"/><rect x="1276" y="143" width="2" height="2" fill="#000080"/><rect x="1278" y="143" width="4" height="2" fill="#0000ff"/><rect x="1284" y="143" width="2" height="2" fill="#000080"/><rect x="1286" y="143" width="8" height="2" fill="#0000ff"/><rect x="1300" y="143" width="6" height="2" fill="#0000ff"/><rect x="1276" y="145" width="2" height="2" fill="#000080"/><rect x="1278" y="145" width="4" height="2" fill="#0000ff"/><rect x="1282" y="145" width="2" height="2" fill="#000080"/><rect x="1284" y="145" width="8" height="2" fill="#0000ff"/><rect x="1300" y="145" width="6" height="2" fill="#0000ff"/><rect x="1276" y="147" width="2" height="2" fill="#000080"/><rect x="1278" y="147" width="12" height="2" fill="#0000ff"/><rect x="1300" y="147" width="6" height="2" fill="#0000ff"/><rect x="1276" y="149" width="2" height="2" fill="#000080"/><rect x="1278" y="149" width="14" height="2" fill="#0000ff"/><rect x="1300" y="149" width="6" height="2" fill="#0000ff"/><rect x="1276" y="151" width="2" height="2" fill="#000080"/><rect x="1278" y="151" width="16" height="2" fill="#0000ff"/><rect x="1300" y="151" width="6" height="2" fill="#0000ff"/><rect x="1276" y="153" width="16" height="2" fill="#000080"/><rect x="1298" y="153" width="6" height="2" fill="#0000ff"/><rect x="1296" y="155" width="8" height="2" fill="#0000ff"/><rect x="1294" y="157" width="8" height="2" fill="#0000ff"/><rect x="1292" y="159" width="8" height="2" fill="#0000ff"/><rect x="1292" y="161" width="6" height="2" fill="#0000ff"/><rect x="1294" y="163" width="2" height="2" fill="#0000ff"/>
<rect x="1324" y="135" width="2" height="2" fill="#a0a0a0"/><rect x="1324" y="137" width="2" height="2" fill="#000000"/><rect x="1326" y="137" width="2" height="2" fill="#a0a0a0"/><rect x="1324" y="139" width="2" height="2" fill="#a0a0a0"/><rect x="1326" y="139" width="4" height="2" fill="#000000"/><rect x="1344" y="139" width="4" height="2" fill="#a0a0a0"/><rect x="1326" y="141" width="2" height="2" fill="#a0a0a0"/><rect x="1328" y="141" width="4" height="2" fill="#000000"/><rect x="1332" y="141" width="2" height="2" fill="#a0a0a0"/><rect x="1340" y="141" width="2" height="2" fill="#a0a0a0"/><rect x="1342" y="141" width="2" height="2" fill="#000000"/><rect x="1344" y="141" width="2" height="2" fill="#a0a0a0"/><rect x="1330" y="143" width="4" height="2" fill="#000000"/><rect x="1334" y="143" width="2" height="2" fill="#a0a0a0"/><rect x="1338" y="143" width="2" height="2" fill="#a0a0a0"/><rect x="1340" y="143" width="2" height="2" fill="#000000"/><rect x="1342" y="143" width="2" height="2" fill="#a0a0a0"/><rect x="1332" y="145" width="2" height="2" fill="#a0a0a0"/><rect x="1334" y="145" width="6" height="2" fill="#000000"/><rect x="1340" y="145" width="2" height="2" fill="#a0a0a0"/><rect x="1334" y="147" width="4" height="2" fill="#000000"/><rect x="1338" y="147" width="2" height="2" fill="#a0a0a0"/><rect x="1332" y="149" width="2" height="2" fill="#a0a0a0"/><rect x="1334" y="149" width="6" height="2" fill="#000000"/><rect x="1340" y="149" width="2" height="2" fill="#a0a0a0"/><rect x="1330" y="151" width="2" height="2" fill="#a0a0a0"/><rect x="1332" y="151" width="2" height="2" fill="#000000"/><rect x="1334" y="151" width="2" height="2" fill="#a0a0a0"/><rect x="1338" y="151" width="2" height="2" fill="#a0a0a0"/><rect x="1340" y="151" width="2" height="2" fill="#000000"/><rect x="1342" y="151" width="2" height="2" fill="#a0a0a0"/><rect x="1328" y="153" width="2" height="2" fill="#a0a0a0"/><rect x="1330" y="153" width="2" height="2" fill="#000000"/><rect x="1332" y="153" width="2" height="2" fill="#a0a0a0"/><rect x="1340" y="153" width="2" height="2" fill="#a0a0a0"/><rect x="1342" y="153" width="2" height="2" fill="#000000"/><rect x="1326" y="155" width="2" height="2" fill="#a0a0a0"/><rect x="1328" y="155" width="2" height="2" fill="#000000"/><rect x="1330" y="155" width="2" height="2" fill="#a0a0a0"/><rect x="1342" y="155" width="4" height="2" fill="#a0a0a0"/><rect x="1326" y="157" width="4" height="2" fill="#000000"/><rect x="1330" y="157" width="2" height="2" fill="#a0a0a0"/><rect x="1344" y="157" width="2" height="2" fill="#000000"/><rect x="1324" y="159" width="2" height="2" fill="#a0a0a0"/><rect x="1326" y="159" width="2" height="2" fill="#000000"/><rect x="1328" y="159" width="2" height="2" fill="#a0a0a0"/><rect x="1344" y="159" width="2" height="2" fill="#a0a0a0"/><rect x="1326" y="161" width="2" height="2" fill="#a0a0a0"/>
<rect x="1368" y="135" width="12" height="2" fill="#000000"/><rect x="1368" y="137" width="2" height="2" fill="#000000"/><rect x="1370" y="137" width="8" height="2" fill="#ffffff"/><rect x="1378" y="137" width="4" height="2" fill="#000000"/><rect x="1368" y="139" width="2" height="2" fill="#000000"/><rect x="1370" y="139" width="8" height="2" fill="#ffffff"/><rect x="1378" y="139" width="2" height="2" fill="#000000"/><rect x="1380" y="139" width="2" height="2" fill="#ffffff"/><rect x="1382" y="139" width="2" height="2" fill="#000000"/><rect x="1368" y="141" width="2" height="2" fill="#000000"/><rect x="1370" y="141" width="2" height="2" fill="#ffffff"/><rect x="1372" y="141" width="4" height="2" fill="#000000"/><rect x="1376" y="141" width="2" height="2" fill="#ffffff"/><rect x="1378" y="141" width="2" height="2" fill="#000000"/><rect x="1380" y="141" width="12" height="2" fill="#000080"/><rect x="1368" y="143" width="2" height="2" fill="#000000"/><rect x="1370" y="143" width="10" height="2" fill="#ffffff"/><rect x="1380" y="143" width="2" height="2" fill="#000080"/><rect x="1382" y="143" width="8" height="2" fill="#ffffff"/><rect x="1390" y="143" width="4" height="2" fill="#000080"/><rect x="1368" y="145" width="2" height="2" fill="#000000"/><rect x="1370" y="145" width="2" height="2" fill="#ffffff"/><rect x="1372" y="145" width="8" height="2" fill="#000000"/><rect x="1380" y="145" width="2" height="2" fill="#000080"/><rect x="1382" y="145" width="8" height="2" fill="#ffffff"/><rect x="1390" y="145" width="2" height="2" fill="#000080"/><rect x="1392" y="145" width="2" height="2" fill="#ffffff"/><rect x="1394" y="145" width="2" height="2" fill="#000080"/><rect x="1368" y="147" width="2" height="2" fill="#000000"/><rect x="1370" y="147" width="10" height="2" fill="#ffffff"/><rect x="1380" y="147" width="2" height="2" fill="#000080"/><rect x="1382" y="147" width="2" height="2" fill="#ffffff"/><rect x="1384" y="147" width="4" height="2" fill="#000000"/><rect x="1388" y="147" width="2" height="2" fill="#ffffff"/><rect x="1390" y="147" width="8" height="2" fill="#000080"/><rect x="1368" y="149" width="2" height="2" fill="#000000"/><rect x="1370" y="149" width="2" height="2" fill="#ffffff"/><rect x="1372" y="149" width="8" height="2" fill="#000000"/><rect x="1380" y="149" width="2" height="2" fill="#000080"/><rect x="1382" y="149" width="14" height="2" fill="#ffffff"/><rect x="1396" y="149" width="2" height="2" fill="#000080"/><rect x="1368" y="151" width="2" height="2" fill="#000000"/><rect x="1370" y="151" width="10" height="2" fill="#ffffff"/><rect x="1380" y="151" width="2" height="2" fill="#000080"/><rect x="1382" y="151" width="2" height="2" fill="#ffffff"/><rect x="1384" y="151" width="10" height="2" fill="#000000"/><rect x="1394" y="151" width="2" height="2" fill="#ffffff"/><rect x="1396" y="151" width="2" height="2" fill="#000080"/><rect x="1368" y="153" width="12" height="2" fill="#000000"/><rect x="1380" y="153" width="2" height="2" fill="#000080"/><rect x="1382" y="153" width="14" height="2" fill="#ffffff"/><rect x="1396" y="153" width="2" height="2" fill="#000080"/><rect x="1380" y="155" width="2" height="2" fill="#000080"/><rect x="1382" y="155" width="2" height="2" fill="#ffffff"/><rect x="1384" y="155" width="10" height="2" fill="#000000"/><rect x="1394" y="155" width="2" height="2" fill="#ffffff"/><rect x="1396" y="155" width="2" height="2" fill="#000080"/><rect x="1380" y="157" width="2" height="2" fill="#000080"/><rect x="1382" y="157" width="14" height="2" fill="#ffffff"/><rect x="1396" y="157" width="2" height="2" fill="#000080"/><rect x="1380" y="159" width="18" height="2" fill="#000080"/>
<rect x="1424" y="135" width="8" height="2" fill="#a2a2a2"/><rect x="1416" y="137" width="24" height="2" fill="#a2a2a2"/><rect x="1414" y="139" width="28" height="2" fill="#a2a2a2"/><rect x="1414" y="141" width="8" height="2" fill="#a2a2a2"/><rect x="1422" y="141" width="12" height="2" fill="#f7f7f7"/><rect x="1434" y="141" width="8" height="2" fill="#a2a2a2"/><rect x="1414" y="143" width="28" height="2" fill="#a2a2a2"/><rect x="1414" y="145" width="28" height="2" fill="#a2a2a2"/><rect x="1414" y="147" width="28" height="2" fill="#a2a2a2"/><rect x="1414" y="149" width="14" height="2" fill="#a2a2a2"/><rect x="1428" y="149" width="10" height="2" fill="#f7f7f7"/><rect x="1438" y="149" width="4" height="2" fill="#a2a2a2"/><rect x="1414" y="151" width="14" height="2" fill="#a2a2a2"/><rect x="1428" y="151" width="10" height="2" fill="#f7f7f7"/><rect x="1438" y="151" width="2" height="2" fill="#a2a2a2"/><rect x="1440" y="151" width="2" height="2" fill="#f7f7f7"/><rect x="1442" y="151" width="2" height="2" fill="#a2a2a2"/><rect x="1414" y="153" width="14" height="2" fill="#a2a2a2"/><rect x="1428" y="153" width="2" height="2" fill="#f7f7f7"/><rect x="1430" y="153" width="6" height="2" fill="#959595"/><rect x="1436" y="153" width="2" height="2" fill="#f7f7f7"/><rect x="1438" y="153" width="6" height="2" fill="#a2a2a2"/><rect x="1414" y="155" width="14" height="2" fill="#a2a2a2"/><rect x="1428" y="155" width="14" height="2" fill="#f7f7f7"/><rect x="1442" y="155" width="2" height="2" fill="#a2a2a2"/><rect x="1414" y="157" width="14" height="2" fill="#a2a2a2"/><rect x="1428" y="157" width="2" height="2" fill="#f7f7f7"/><rect x="1430" y="157" width="10" height="2" fill="#959595"/><rect x="1440" y="157" width="2" height="2" fill="#f7f7f7"/><rect x="1442" y="157" width="2" height="2" fill="#a2a2a2"/><rect x="1416" y="159" width="12" height="2" fill="#a2a2a2"/><rect x="1428" y="159" width="14" height="2" fill="#f7f7f7"/><rect x="1442" y="159" width="2" height="2" fill="#a2a2a2"/><rect x="1426" y="161" width="18" height="2" fill="#a2a2a2"/>
<rect x="1466" y="137" width="2" height="2" fill="#000000"/><rect x="1474" y="137" width="2" height="2" fill="#ff0000"/><rect x="1482" y="137" width="2" height="2" fill="#ff0000"/><rect x="1490" y="137" width="2" height="2" fill="#ff0000"/><rect x="1466" y="139" width="2" height="2" fill="#000000"/><rect x="1474" y="139" width="2" height="2" fill="#ff0000"/><rect x="1482" y="139" width="2" height="2" fill="#ff0000"/><rect x="1490" y="139" width="2" height="2" fill="#ff0000"/><rect x="1466" y="141" width="2" height="2" fill="#000000"/><rect x="1474" y="141" width="2" height="2" fill="#ff0000"/><rect x="1482" y="141" width="2" height="2" fill="#ff0000"/><rect x="1490" y="141" width="2" height="2" fill="#ff0000"/><rect x="1466" y="143" width="2" height="2" fill="#000000"/><rect x="1474" y="143" width="2" height="2" fill="#ff0000"/><rect x="1482" y="143" width="2" height="2" fill="#ff0000"/><rect x="1490" y="143" width="2" height="2" fill="#ff0000"/><rect x="1466" y="145" width="2" height="2" fill="#000000"/><rect x="1468" y="145" width="26" height="2" fill="#ff0000"/><rect x="1466" y="147" width="2" height="2" fill="#000000"/><rect x="1474" y="147" width="2" height="2" fill="#ff0000"/><rect x="1482" y="147" width="2" height="2" fill="#ff0000"/><rect x="1490" y="147" width="2" height="2" fill="#ff0000"/><rect x="1466" y="149" width="2" height="2" fill="#000000"/><rect x="1474" y="149" width="2" height="2" fill="#ff0000"/><rect x="1482" y="149" width="2" height="2" fill="#ff0000"/><rect x="1490" y="149" width="2" height="2" fill="#ff0000"/><rect x="1466" y="151" width="2" height="2" fill="#000000"/><rect x="1474" y="151" width="2" height="2" fill="#ff0000"/><rect x="1482" y="151" width="2" height="2" fill="#ff0000"/><rect x="1490" y="151" width="2" height="2" fill="#ff0000"/><rect x="1466" y="153" width="2" height="2" fill="#000000"/><rect x="1468" y="153" width="26" height="2" fill="#ff0000"/><rect x="1466" y="155" width="2" height="2" fill="#000000"/><rect x="1474" y="155" width="2" height="2" fill="#ff0000"/><rect x="1482" y="155" width="2" height="2" fill="#ff0000"/><rect x="1490" y="155" width="2" height="2" fill="#ff0000"/><rect x="1466" y="157" width="2" height="2" fill="#000000"/><rect x="1474" y="157" width="2" height="2" fill="#ff0000"/><rect x="1482" y="157" width="2" height="2" fill="#ff0000"/><rect x="1490" y="157" width="2" height="2" fill="#ff0000"/><rect x="1466" y="159" width="2" height="2" fill="#000000"/><rect x="1474" y="159" width="2" height="2" fill="#ff0000"/><rect x="1482" y="159" width="2" height="2" fill="#ff0000"/><rect x="1490" y="159" width="2" height="2" fill="#ff0000"/><rect x="1466" y="161" width="28" height="2" fill="#000000"/>
<rect x="1513" y="137" width="28" height="2" fill="#000000"/><rect x="1513" y="139" width="2" height="2" fill="#000000"/><rect x="1539" y="139" width="2" height="2" fill="#000000"/><rect x="1513" y="141" width="2" height="2" fill="#000000"/><rect x="1539" y="141" width="2" height="2" fill="#000000"/><rect x="1513" y="143" width="2" height="2" fill="#000000"/><rect x="1517" y="143" width="20" height="2" fill="#ff0000"/><rect x="1539" y="143" width="2" height="2" fill="#000000"/><rect x="1513" y="145" width="2" height="2" fill="#000000"/><rect x="1539" y="145" width="2" height="2" fill="#000000"/><rect x="1513" y="147" width="2" height="2" fill="#000000"/><rect x="1539" y="147" width="2" height="2" fill="#000000"/><rect x="1513" y="149" width="2" height="2" fill="#000000"/><rect x="1517" y="149" width="20" height="2" fill="#00ff00"/><rect x="1539" y="149" width="2" height="2" fill="#000000"/><rect x="1513" y="151" width="2" height="2" fill="#000000"/><rect x="1539" y="151" width="2" height="2" fill="#000000"/><rect x="1513" y="153" width="2" height="2" fill="#000000"/><rect x="1539" y="153" width="2" height="2" fill="#000000"/><rect x="1513" y="155" width="2" height="2" fill="#000000"/><rect x="1517" y="155" width="20" height="2" fill="#ffff00"/><rect x="1539" y="155" width="2" height="2" fill="#000000"/><rect x="1513" y="157" width="2" height="2" fill="#000000"/><rect x="1539" y="157" width="2" height="2" fill="#000000"/><rect x="1513" y="159" width="2" height="2" fill="#000000"/><rect x="1539" y="159" width="2" height="2" fill="#000000"/><rect x="1513" y="161" width="28" height="2" fill="#000000"/>
<rect x="1558" y="137" width="2" height="2" fill="#000000"/><rect x="1564" y="137" width="2" height="2" fill="#000000"/><rect x="1568" y="137" width="2" height="2" fill="#000000"/><rect x="1578" y="137" width="2" height="2" fill="#000000"/><rect x="1582" y="137" width="2" height="2" fill="#000000"/><rect x="1558" y="139" width="2" height="2" fill="#000000"/><rect x="1566" y="139" width="2" height="2" fill="#000000"/><rect x="1580" y="139" width="2" height="2" fill="#000000"/><rect x="1558" y="141" width="2" height="2" fill="#000000"/><rect x="1566" y="141" width="2" height="2" fill="#000000"/><rect x="1580" y="141" width="2" height="2" fill="#000000"/><rect x="1558" y="143" width="2" height="2" fill="#000000"/><rect x="1564" y="143" width="2" height="2" fill="#ff0000"/><rect x="1566" y="143" width="2" height="2" fill="#000000"/><rect x="1580" y="143" width="2" height="2" fill="#000000"/><rect x="1584" y="143" width="2" height="2" fill="#ff0000"/><rect x="1558" y="145" width="2" height="2" fill="#000000"/><rect x="1562" y="145" width="2" height="2" fill="#ff0000"/><rect x="1566" y="145" width="2" height="2" fill="#000000"/><rect x="1568" y="145" width="2" height="2" fill="#ff0000"/><rect x="1580" y="145" width="2" height="2" fill="#000000"/><rect x="1582" y="145" width="2" height="2" fill="#ff0000"/><rect x="1558" y="147" width="2" height="2" fill="#000000"/><rect x="1560" y="147" width="2" height="2" fill="#ff0000"/><rect x="1566" y="147" width="2" height="2" fill="#000000"/><rect x="1570" y="147" width="2" height="2" fill="#ff0000"/><rect x="1580" y="147" width="2" height="2" fill="#000000"/><rect x="1558" y="149" width="2" height="2" fill="#000000"/><rect x="1560" y="149" width="2" height="2" fill="#ff0000"/><rect x="1566" y="149" width="2" height="2" fill="#000000"/><rect x="1570" y="149" width="2" height="2" fill="#ff0000"/><rect x="1580" y="149" width="2" height="2" fill="#000000"/><rect x="1558" y="151" width="2" height="2" fill="#000000"/><rect x="1566" y="151" width="2" height="2" fill="#000000"/><rect x="1570" y="151" width="2" height="2" fill="#ff0000"/><rect x="1580" y="151" width="2" height="2" fill="#000000"/><rect x="1558" y="153" width="2" height="2" fill="#000000"/><rect x="1566" y="153" width="2" height="2" fill="#000000"/><rect x="1572" y="153" width="2" height="2" fill="#ff0000"/><rect x="1578" y="153" width="2" height="2" fill="#ff0000"/><rect x="1580" y="153" width="2" height="2" fill="#000000"/><rect x="1558" y="155" width="2" height="2" fill="#000000"/><rect x="1566" y="155" width="2" height="2" fill="#000000"/><rect x="1574" y="155" width="4" height="2" fill="#ff0000"/><rect x="1580" y="155" width="2" height="2" fill="#000000"/><rect x="1558" y="157" width="2" height="2" fill="#000000"/><rect x="1566" y="157" width="2" height="2" fill="#000000"/><rect x="1580" y="157" width="2" height="2" fill="#000000"/><rect x="1558" y="159" width="2" height="2" fill="#000000"/><rect x="1566" y="159" width="2" height="2" fill="#000000"/><rect x="1580" y="159" width="2" height="2" fill="#000000"/><rect x="1558" y="161" width="28" height="2" fill="#000000"/>
<rect x="1605" y="137" width="20" height="2" fill="#000000"/><rect x="1605" y="139" width="2" height="2" fill="#000000"/><rect x="1607" y="139" width="16" height="2" fill="#ffffff"/><rect x="1623" y="139" width="2" height="2" fill="#000000"/><rect x="1605" y="141" width="2" height="2" fill="#000000"/><rect x="1607" y="141" width="16" height="2" fill="#ffffff"/><rect x="1623" y="141" width="2" height="2" fill="#000000"/><rect x="1605" y="143" width="2" height="2" fill="#000000"/><rect x="1607" y="143" width="16" height="2" fill="#ffffff"/><rect x="1623" y="143" width="2" height="2" fill="#000000"/><rect x="1605" y="145" width="2" height="2" fill="#000000"/><rect x="1607" y="145" width="6" height="2" fill="#ffffff"/><rect x="1613" y="145" width="20" height="2" fill="#000000"/><rect x="1605" y="147" width="2" height="2" fill="#000000"/><rect x="1607" y="147" width="6" height="2" fill="#ffffff"/><rect x="1613" y="147" width="2" height="2" fill="#000000"/><rect x="1615" y="147" width="8" height="2" fill="#ffffff"/><rect x="1623" y="147" width="10" height="2" fill="#000000"/><rect x="1605" y="149" width="2" height="2" fill="#000000"/><rect x="1607" y="149" width="6" height="2" fill="#ffffff"/><rect x="1613" y="149" width="2" height="2" fill="#000000"/><rect x="1615" y="149" width="8" height="2" fill="#ffffff"/><rect x="1623" y="149" width="10" height="2" fill="#000000"/><rect x="1605" y="151" width="2" height="2" fill="#000000"/><rect x="1607" y="151" width="6" height="2" fill="#ffffff"/><rect x="1613" y="151" width="2" height="2" fill="#000000"/><rect x="1615" y="151" width="8" height="2" fill="#ffffff"/><rect x="1623" y="151" width="10" height="2" fill="#000000"/><rect x="1605" y="153" width="28" height="2" fill="#000000"/><rect x="1613" y="155" width="20" height="2" fill="#000000"/><rect x="1613" y="157" width="20" height="2" fill="#000000"/><rect x="1613" y="159" width="20" height="2" fill="#000000"/><rect x="1613" y="161" width="20" height="2" fill="#000000"/>
<rect x="1673" y="137" width="2" height="2" fill="#ff0000"/><rect x="1671" y="139" width="2" height="2" fill="#ff0000"/><rect x="1675" y="139" width="2" height="2" fill="#ff0000"/><rect x="1671" y="141" width="2" height="2" fill="#ff0000"/><rect x="1675" y="141" width="2" height="2" fill="#ff0000"/><rect x="1671" y="143" width="2" height="2" fill="#ff0000"/><rect x="1677" y="143" width="2" height="2" fill="#ff0000"/><rect x="1671" y="145" width="2" height="2" fill="#ff0000"/><rect x="1679" y="145" width="2" height="2" fill="#ff0000"/><rect x="1669" y="147" width="2" height="2" fill="#ff0000"/><rect x="1679" y="147" width="2" height="2" fill="#ff0000"/><rect x="1669" y="149" width="2" height="2" fill="#ff0000"/><rect x="1681" y="149" width="2" height="2" fill="#ff0000"/><rect x="1667" y="151" width="2" height="2" fill="#ff0000"/><rect x="1683" y="151" width="2" height="2" fill="#ff0000"/><rect x="1661" y="153" width="6" height="2" fill="#ff0000"/><rect x="1683" y="153" width="2" height="2" fill="#ff0000"/><rect x="1655" y="155" width="6" height="2" fill="#ff0000"/><rect x="1685" y="155" width="2" height="2" fill="#ff0000"/>
<rect x="1702" y="153" width="4" height="2" fill="#ff0000"/><rect x="1700" y="155" width="8" height="2" fill="#ff0000"/><rect x="1700" y="157" width="8" height="2" fill="#ff0000"/><rect x="1702" y="159" width="4" height="2" fill="#ff0000"/>
<rect x="1716" y="137" width="4" height="2" fill="#ff0000"/><rect x="1714" y="139" width="8" height="2" fill="#ff0000"/><rect x="1714" y="141" width="8" height="2" fill="#ff0000"/><rect x="1716" y="143" width="4" height="2" fill="#ff0000"/>
<rect x="1726" y="151" width="4" height="2" fill="#ff0000"/><rect x="1724" y="153" width="8" height="2" fill="#ff0000"/><rect x="1724" y="155" width="8" height="2" fill="#ff0000"/><rect x="1726" y="157" width="4" height="2" fill="#ff0000"/>
<rect x="1748" y="153" width="4" height="2" fill="#ff0000"/><rect x="1746" y="155" width="8" height="2" fill="#ff0000"/><rect x="1746" y="157" width="8" height="2" fill="#ff0000"/><rect x="1748" y="159" width="4" height="2" fill="#ff0000"/>
<rect x="1762" y="137" width="4" height="2" fill="#ff0000"/><rect x="1760" y="139" width="8" height="2" fill="#ff0000"/><rect x="1760" y="141" width="8" height="2" fill="#ff0000"/><rect x="1762" y="143" width="4" height="2" fill="#ff0000"/>
<rect x="1772" y="151" width="4" height="2" fill="#ff0000"/><rect x="1770" y="153" width="8" height="2" fill="#ff0000"/><rect x="1770" y="155" width="8" height="2" fill="#ff0000"/><rect x="1772" y="157" width="4" height="2" fill="#ff0000"/>
<rect x="1754" y="155" width="2" height="2" fill="#ff0000"/>
<rect x="1756" y="151" width="2" height="4" fill="#ff0000"/>
<rect x="1758" y="147" width="2" height="4" fill="#ff0000"/>
<rect x="1760" y="145" width="2" height="2" fill="#ff0000"/>
<rect x="1766" y="145" width="2" height="4" fill="#ff0000"/>
<rect x="1768" y="149" width="2" height="4" fill="#ff0000"/>
<rect x="1808" y="135" width="8" height="2" fill="#000000"/><rect x="1804" y="137" width="4" height="2" fill="#000000"/><rect x="1816" y="137" width="4" height="2" fill="#000000"/><rect x="1802" y="139" width="2" height="2" fill="#000000"/><rect x="1804" y="139" width="2" height="2" fill="#a0a0a0"/><rect x="1818" y="139" width="2" height="2" fill="#a0a0a0"/><rect x="1820" y="139" width="2" height="2" fill="#000000"/><rect x="1802" y="141" width="2" height="2" fill="#000000"/><rect x="1810" y="141" width="4" height="2" fill="#800000"/><rect x="1820" y="141" width="2" height="2" fill="#000000"/><rect x="1800" y="143" width="2" height="2" fill="#000000"/><rect x="1810" y="143" width="4" height="2" fill="#800000"/><rect x="1822" y="143" width="2" height="2" fill="#000000"/><rect x="1800" y="145" width="2" height="2" fill="#000000"/><rect x="1806" y="145" width="12" height="2" fill="#800000"/><rect x="1822" y="145" width="2" height="2" fill="#000000"/><rect x="1800" y="147" width="2" height="2" fill="#000000"/><rect x="1806" y="147" width="12" height="2" fill="#800000"/><rect x="1822" y="147" width="2" height="2" fill="#000000"/><rect x="1800" y="149" width="2" height="2" fill="#000000"/><rect x="1810" y="149" width="4" height="2" fill="#800000"/><rect x="1822" y="149" width="2" height="2" fill="#000000"/><rect x="1802" y="151" width="2" height="2" fill="#000000"/><rect x="1810" y="151" width="4" height="2" fill="#800000"/><rect x="1820" y="151" width="2" height="2" fill="#000000"/><rect x="1802" y="153" width="2" height="2" fill="#000000"/><rect x="1804" y="153" width="2" height="2" fill="#a0a0a0"/><rect x="1818" y="153" width="2" height="2" fill="#a0a0a0"/><rect x="1820" y="153" width="2" height="2" fill="#000000"/><rect x="1822" y="153" width="2" height="2" fill="#a0a0a0"/><rect x="1804" y="155" width="4" height="2" fill="#000000"/><rect x="1816" y="155" width="2" height="2" fill="#a0a0a0"/><rect x="1818" y="155" width="6" height="2" fill="#000080"/><rect x="1808" y="157" width="8" height="2" fill="#000000"/><rect x="1816" y="157" width="2" height="2" fill="#000080"/><rect x="1818" y="157" width="2" height="2" fill="#ffffff"/><rect x="1820" y="157" width="6" height="2" fill="#000080"/><rect x="1818" y="159" width="2" height="2" fill="#000080"/><rect x="1820" y="159" width="2" height="2" fill="#ffffff"/><rect x="1822" y="159" width="6" height="2" fill="#000080"/><rect x="1820" y="161" width="2" height="2" fill="#000080"/><rect x="1822" y="161" width="2" height="2" fill="#ffffff"/><rect x="1824" y="161" width="4" height="2" fill="#000080"/><rect x="1822" y="163" width="4" height="2" fill="#000080"/>
<rect x="1854" y="135" width="8" height="2" fill="#000000"/><rect x="1850" y="137" width="4" height="2" fill="#000000"/><rect x="1862" y="137" width="4" height="2" fill="#000000"/><rect x="1848" y="139" width="2" height="2" fill="#000000"/><rect x="1850" y="139" width="2" height="2" fill="#a0a0a0"/><rect x="1864" y="139" width="2" height="2" fill="#a0a0a0"/><rect x="1866" y="139" width="2" height="2" fill="#000000"/><rect x="1848" y="141" width="2" height="2" fill="#000000"/><rect x="1866" y="141" width="2" height="2" fill="#000000"/><rect x="1846" y="143" width="2" height="2" fill="#000000"/><rect x="1868" y="143" width="2" height="2" fill="#000000"/><rect x="1846" y="145" width="2" height="2" fill="#000000"/><rect x="1852" y="145" width="12" height="2" fill="#008000"/><rect x="1868" y="145" width="2" height="2" fill="#000000"/><rect x="1846" y="147" width="2" height="2" fill="#000000"/><rect x="1852" y="147" width="12" height="2" fill="#008000"/><rect x="1868" y="147" width="2" height="2" fill="#000000"/><rect x="1846" y="149" width="2" height="2" fill="#000000"/><rect x="1868" y="149" width="2" height="2" fill="#000000"/><rect x="1848" y="151" width="2" height="2" fill="#000000"/><rect x="1866" y="151" width="2" height="2" fill="#000000"/><rect x="1848" y="153" width="2" height="2" fill="#000000"/><rect x="1850" y="153" width="2" height="2" fill="#a0a0a0"/><rect x="1864" y="153" width="2" height="2" fill="#a0a0a0"/><rect x="1866" y="153" width="2" height="2" fill="#000000"/><rect x="1868" y="153" width="2" height="2" fill="#a0a0a0"/><rect x="1850" y="155" width="4" height="2" fill="#000000"/><rect x="1862" y="155" width="2" height="2" fill="#a0a0a0"/><rect x="1864" y="155" width="6" height="2" fill="#000080"/><rect x="1854" y="157" width="8" height="2" fill="#000000"/><rect x="1862" y="157" width="2" height="2" fill="#000080"/><rect x="1864" y="157" width="2" height="2" fill="#ffffff"/><rect x="1866" y="157" width="6" height="2" fill="#000080"/><rect x="1864" y="159" width="2" height="2" fill="#000080"/><rect x="1866" y="159" width="2" height="2" fill="#ffffff"/><rect x="1868" y="159" width="6" height="2" fill="#000080"/><rect x="1866" y="161" width="2" height="2" fill="#000080"/><rect x="1868" y="161" width="2" height="2" fill="#ffffff"/><rect x="1870" y="161" width="4" height="2" fill="#000080"/><rect x="1868" y="163" width="4" height="2" fill="#000080"/>
<rect x="1914" y="135" width="8" height="2" fill="#000000"/><rect x="1896" y="137" width="12" height="2" fill="#9a9a9a"/><rect x="1916" y="137" width="6" height="2" fill="#000000"/><rect x="1896" y="139" width="12" height="2" fill="#ffffff"/><rect x="1908" y="139" width="4" height="2" fill="#9a9a9a"/><rect x="1918" y="139" width="4" height="2" fill="#000000"/><rect x="1894" y="141" width="16" height="2" fill="#ffffff"/><rect x="1910" y="141" width="4" height="2" fill="#9a9a9a"/><rect x="1920" y="141" width="2" height="2" fill="#000000"/><rect x="1892" y="143" width="2" height="2" fill="#9a9a9a"/><rect x="1894" y="143" width="16" height="2" fill="#ffffff"/><rect x="1910" y="143" width="4" height="2" fill="#9a9a9a"/><rect x="1892" y="145" width="2" height="2" fill="#9a9a9a"/><rect x="1894" y="145" width="16" height="2" fill="#ffffff"/><rect x="1910" y="145" width="2" height="2" fill="#9a9a9a"/><rect x="1912" y="145" width="2" height="2" fill="#000000"/><rect x="1892" y="147" width="2" height="2" fill="#9a9a9a"/><rect x="1894" y="147" width="16" height="2" fill="#ffffff"/><rect x="1910" y="147" width="2" height="2" fill="#9a9a9a"/><rect x="1912" y="147" width="2" height="2" fill="#000000"/><rect x="1892" y="149" width="2" height="2" fill="#9a9a9a"/><rect x="1894" y="149" width="16" height="2" fill="#ffffff"/><rect x="1910" y="149" width="2" height="2" fill="#9a9a9a"/><rect x="1912" y="149" width="2" height="2" fill="#000000"/><rect x="1892" y="151" width="2" height="2" fill="#9a9a9a"/><rect x="1894" y="151" width="16" height="2" fill="#ffffff"/><rect x="1910" y="151" width="2" height="2" fill="#9a9a9a"/><rect x="1912" y="151" width="2" height="2" fill="#000000"/><rect x="1892" y="153" width="4" height="2" fill="#9a9a9a"/><rect x="1896" y="153" width="12" height="2" fill="#ffffff"/><rect x="1908" y="153" width="2" height="2" fill="#9a9a9a"/><rect x="1910" y="153" width="2" height="2" fill="#000000"/><rect x="1912" y="153" width="2" height="2" fill="#9a9a9a"/><rect x="1894" y="155" width="14" height="2" fill="#9a9a9a"/><rect x="1908" y="155" width="6" height="2" fill="#000000"/><rect x="1896" y="157" width="4" height="2" fill="#9a9a9a"/><rect x="1900" y="157" width="8" height="2" fill="#000000"/><rect x="1908" y="157" width="4" height="2" fill="#9a9a9a"/><rect x="1912" y="157" width="4" height="2" fill="#000000"/><rect x="1890" y="159" width="2" height="2" fill="#000000"/><rect x="1910" y="159" width="4" height="2" fill="#9a9a9a"/><rect x="1914" y="159" width="4" height="2" fill="#000000"/><rect x="1890" y="161" width="4" height="2" fill="#000000"/><rect x="1912" y="161" width="4" height="2" fill="#9a9a9a"/><rect x="1916" y="161" width="4" height="2" fill="#000000"/><rect x="1890" y="163" width="6" height="2" fill="#000000"/><rect x="1916" y="163" width="4" height="2" fill="#9a9a9a"/>
<rect x="1947" y="135" width="6" height="2" fill="#000000"/><rect x="1943" y="137" width="4" height="2" fill="#000000"/><rect x="1947" y="137" width="6" height="2" fill="#ffffff"/><rect x="1953" y="137" width="4" height="2" fill="#000000"/><rect x="1941" y="139" width="2" height="2" fill="#000000"/><rect x="1943" y="139" width="14" height="2" fill="#ffffff"/><rect x="1957" y="139" width="2" height="2" fill="#000000"/><rect x="1941" y="141" width="2" height="2" fill="#000000"/><rect x="1943" y="141" width="2" height="2" fill="#ffffff"/><rect x="1945" y="141" width="10" height="2" fill="#0000ff"/><rect x="1955" y="141" width="2" height="2" fill="#ffffff"/><rect x="1957" y="141" width="10" height="2" fill="#000000"/><rect x="1939" y="143" width="2" height="2" fill="#000000"/><rect x="1941" y="143" width="4" height="2" fill="#ffffff"/><rect x="1945" y="143" width="2" height="2" fill="#0000ff"/><rect x="1947" y="143" width="6" height="2" fill="#ffffff"/><rect x="1953" y="143" width="2" height="2" fill="#0000ff"/><rect x="1955" y="143" width="4" height="2" fill="#ffffff"/><rect x="1959" y="143" width="2" height="2" fill="#000000"/><rect x="1961" y="143" width="4" height="2" fill="#ffffff"/><rect x="1965" y="143" width="2" height="2" fill="#000000"/><rect x="1939" y="145" width="2" height="2" fill="#000000"/><rect x="1941" y="145" width="4" height="2" fill="#ffffff"/><rect x="1945" y="145" width="2" height="2" fill="#0000ff"/><rect x="1947" y="145" width="6" height="2" fill="#ffffff"/><rect x="1953" y="145" width="2" height="2" fill="#0000ff"/><rect x="1955" y="145" width="4" height="2" fill="#ffffff"/><rect x="1959" y="145" width="2" height="2" fill="#000000"/><rect x="1961" y="145" width="4" height="2" fill="#ffffff"/><rect x="1965" y="145" width="2" height="2" fill="#000000"/><rect x="1939" y="147" width="2" height="2" fill="#000000"/><rect x="1941" y="147" width="4" height="2" fill="#ffffff"/><rect x="1945" y="147" width="2" height="2" fill="#0000ff"/><rect x="1947" y="147" width="6" height="2" fill="#ffffff"/><rect x="1953" y="147" width="2" height="2" fill="#0000ff"/><rect x="1955" y="147" width="4" height="2" fill="#ffffff"/><rect x="1959" y="147" width="2" height="2" fill="#000000"/><rect x="1961" y="147" width="4" height="2" fill="#ffffff"/><rect x="1965" y="147" width="2" height="2" fill="#000000"/><rect x="1941" y="149" width="2" height="2" fill="#000000"/><rect x="1943" y="149" width="2" height="2" fill="#ffffff"/><rect x="1945" y="149" width="10" height="2" fill="#0000ff"/><rect x="1955" y="149" width="2" height="2" fill="#ffffff"/><rect x="1957" y="149" width="2" height="2" fill="#000000"/><rect x="1959" y="149" width="6" height="2" fill="#ffffff"/><rect x="1965" y="149" width="2" height="2" fill="#000000"/><rect x="1941" y="151" width="2" height="2" fill="#000000"/><rect x="1943" y="151" width="14" height="2" fill="#ffffff"/><rect x="1957" y="151" width="4" height="2" fill="#000000"/><rect x="1961" y="151" width="4" height="2" fill="#ffffff"/><rect x="1965" y="151" width="2" height="2" fill="#000000"/><rect x="1943" y="153" width="4" height="2" fill="#000000"/><rect x="1947" y="153" width="6" height="2" fill="#ffffff"/><rect x="1953" y="153" width="4" height="2" fill="#000000"/><rect x="1957" y="153" width="2" height="2" fill="#ffffff"/><rect x="1959" y="153" width="2" height="2" fill="#ffff00"/><rect x="1961" y="153" width="2" height="2" fill="#000000"/><rect x="1963" y="153" width="2" height="2" fill="#ffffff"/><rect x="1965" y="153" width="2" height="2" fill="#000000"/><rect x="1943" y="155" width="2" height="2" fill="#000000"/><rect x="1945" y="155" width="2" height="2" fill="#ffffff"/><rect x="1947" y="155" width="6" height="2" fill="#000000"/><rect x="1953" y="155" width="2" height="2" fill="#ffffff"/><rect x="1955" y="155" width="2" height="2" fill="#000000"/><rect x="1957" y="155" width="2" height="2" fill="#808000"/><rect x="1959" y="155" width="2" height="2" fill="#ffffff"/><rect x="1961" y="155" width="2" height="2" fill="#ffff00"/><rect x="1963" y="155" width="4" height="2" fill="#000000"/><rect x="1943" y="157" width="2" height="2" fill="#000000"/><rect x="1945" y="157" width="12" height="2" fill="#ffffff"/><rect x="1957" y="157" width="2" height="2" fill="#000000"/><rect x="1959" y="157" width="2" height="2" fill="#808000"/><rect x="1961" y="157" width="2" height="2" fill="#ffffff"/><rect x="1963" y="157" width="2" height="2" fill="#ffff00"/><rect x="1965" y="157" width="2" height="2" fill="#000000"/><rect x="1943" y="159" width="18" height="2" fill="#000000"/><rect x="1961" y="159" width="2" height="2" fill="#808000"/><rect x="1963" y="159" width="2" height="2" fill="#ffffff"/><rect x="1965" y="159" width="2" height="2" fill="#ffff00"/><rect x="1967" y="159" width="2" height="2" fill="#000000"/><rect x="1961" y="161" width="2" height="2" fill="#000000"/><rect x="1963" y="161" width="2" height="2" fill="#808000"/><rect x="1965" y="161" width="2" height="2" fill="#000000"/>
<rect x="1992" y="135" width="6" height="2" fill="#000000"/><rect x="1988" y="137" width="4" height="2" fill="#000000"/><rect x="1992" y="137" width="6" height="2" fill="#ffffff"/><rect x="1998" y="137" width="4" height="2" fill="#000000"/><rect x="1986" y="139" width="2" height="2" fill="#000000"/><rect x="1988" y="139" width="14" height="2" fill="#ffffff"/><rect x="2002" y="139" width="2" height="2" fill="#000000"/><rect x="1986" y="141" width="2" height="2" fill="#000000"/><rect x="1988" y="141" width="4" height="2" fill="#ffffff"/><rect x="1992" y="141" width="2" height="2" fill="#0000ff"/><rect x="1994" y="141" width="2" height="2" fill="#ffffff"/><rect x="1996" y="141" width="2" height="2" fill="#0000ff"/><rect x="1998" y="141" width="4" height="2" fill="#ffffff"/><rect x="2002" y="141" width="10" height="2" fill="#000000"/><rect x="1984" y="143" width="2" height="2" fill="#000000"/><rect x="1986" y="143" width="4" height="2" fill="#ffffff"/><rect x="1990" y="143" width="4" height="2" fill="#0000ff"/><rect x="1994" y="143" width="2" height="2" fill="#ffffff"/><rect x="1996" y="143" width="4" height="2" fill="#0000ff"/><rect x="2000" y="143" width="4" height="2" fill="#ffffff"/><rect x="2004" y="143" width="2" height="2" fill="#000000"/><rect x="2006" y="143" width="4" height="2" fill="#ffffff"/><rect x="2010" y="143" width="2" height="2" fill="#000000"/><rect x="1984" y="145" width="2" height="2" fill="#000000"/><rect x="1986" y="145" width="2" height="2" fill="#ffffff"/><rect x="1988" y="145" width="14" height="2" fill="#0000ff"/><rect x="2002" y="145" width="2" height="2" fill="#ffffff"/><rect x="2004" y="145" width="2" height="2" fill="#000000"/><rect x="2006" y="145" width="4" height="2" fill="#ffffff"/><rect x="2010" y="145" width="2" height="2" fill="#000000"/><rect x="1984" y="147" width="2" height="2" fill="#000000"/><rect x="1986" y="147" width="4" height="2" fill="#ffffff"/><rect x="1990" y="147" width="4" height="2" fill="#0000ff"/><rect x="1994" y="147" width="2" height="2" fill="#ffffff"/><rect x="1996" y="147" width="4" height="2" fill="#0000ff"/><rect x="2000" y="147" width="4" height="2" fill="#ffffff"/><rect x="2004" y="147" width="2" height="2" fill="#000000"/><rect x="2006" y="147" width="4" height="2" fill="#ffffff"/><rect x="2010" y="147" width="2" height="2" fill="#000000"/><rect x="1986" y="149" width="2" height="2" fill="#000000"/><rect x="1988" y="149" width="4" height="2" fill="#ffffff"/><rect x="1992" y="149" width="2" height="2" fill="#0000ff"/><rect x="1994" y="149" width="2" height="2" fill="#ffffff"/><rect x="1996" y="149" width="2" height="2" fill="#0000ff"/><rect x="1998" y="149" width="4" height="2" fill="#ffffff"/><rect x="2002" y="149" width="2" height="2" fill="#000000"/><rect x="2004" y="149" width="6" height="2" fill="#ffffff"/><rect x="2010" y="149" width="2" height="2" fill="#000000"/><rect x="1986" y="151" width="2" height="2" fill="#000000"/><rect x="1988" y="151" width="14" height="2" fill="#ffffff"/><rect x="2002" y="151" width="4" height="2" fill="#000000"/><rect x="2006" y="151" width="4" height="2" fill="#ffffff"/><rect x="2010" y="151" width="2" height="2" fill="#000000"/><rect x="1988" y="153" width="4" height="2" fill="#000000"/><rect x="1992" y="153" width="6" height="2" fill="#ffffff"/><rect x="1998" y="153" width="4" height="2" fill="#000000"/><rect x="2002" y="153" width="2" height="2" fill="#ffffff"/><rect x="2004" y="153" width="2" height="2" fill="#ffff00"/><rect x="2006" y="153" width="2" height="2" fill="#000000"/><rect x="2008" y="153" width="2" height="2" fill="#ffffff"/><rect x="2010" y="153" width="2" height="2" fill="#000000"/><rect x="1988" y="155" width="2" height="2" fill="#000000"/><rect x="1990" y="155" width="2" height="2" fill="#ffffff"/><rect x="1992" y="155" width="6" height="2" fill="#000000"/><rect x="1998" y="155" width="2" height="2" fill="#ffffff"/><rect x="2000" y="155" width="2" height="2" fill="#000000"/><rect x="2002" y="155" width="2" height="2" fill="#808000"/><rect x="2004" y="155" width="2" height="2" fill="#ffffff"/><rect x="2006" y="155" width="2" height="2" fill="#ffff00"/><rect x="2008" y="155" width="4" height="2" fill="#000000"/><rect x="1988" y="157" width="2" height="2" fill="#000000"/><rect x="1990" y="157" width="12" height="2" fill="#ffffff"/><rect x="2002" y="157" width="2" height="2" fill="#000000"/><rect x="2004" y="157" width="2" height="2" fill="#808000"/><rect x="2006" y="157" width="2" height="2" fill="#ffffff"/><rect x="2008" y="157" width="2" height="2" fill="#ffff00"/><rect x="2010" y="157" width="2" height="2" fill="#000000"/><rect x="1988" y="159" width="18" height="2" fill="#000000"/><rect x="2006" y="159" width="2" height="2" fill="#808000"/><rect x="2008" y="159" width="2" height="2" fill="#ffffff"/><rect x="2010" y="159" width="2" height="2" fill="#ffff00"/><rect x="2012" y="159" width="2" height="2" fill="#000000"/><rect x="2006" y="161" width="2" height="2" fill="#000000"/><rect x="2008" y="161" width="2" height="2" fill="#808000"/><rect x="2010" y="161" width="2" height="2" fill="#000000"/>
<rect x="2038" y="135" width="6" height="2" fill="#000000"/><rect x="2034" y="137" width="4" height="2" fill="#000000"/><rect x="2038" y="137" width="6" height="2" fill="#ffffff"/><rect x="2044" y="137" width="4" height="2" fill="#000000"/><rect x="2032" y="139" width="2" height="2" fill="#000000"/><rect x="2034" y="139" width="6" height="2" fill="#ffffff"/><rect x="2040" y="139" width="2" height="2" fill="#0000ff"/><rect x="2042" y="139" width="6" height="2" fill="#ffffff"/><rect x="2048" y="139" width="2" height="2" fill="#000000"/><rect x="2032" y="141" width="2" height="2" fill="#000000"/><rect x="2034" y="141" width="4" height="2" fill="#ffffff"/><rect x="2038" y="141" width="6" height="2" fill="#0000ff"/><rect x="2044" y="141" width="4" height="2" fill="#ffffff"/><rect x="2048" y="141" width="10" height="2" fill="#000000"/><rect x="2030" y="143" width="2" height="2" fill="#000000"/><rect x="2032" y="143" width="4" height="2" fill="#ffffff"/><rect x="2036" y="143" width="10" height="2" fill="#0000ff"/><rect x="2046" y="143" width="4" height="2" fill="#ffffff"/><rect x="2050" y="143" width="2" height="2" fill="#000000"/><rect x="2052" y="143" width="4" height="2" fill="#ffffff"/><rect x="2056" y="143" width="2" height="2" fill="#000000"/><rect x="2030" y="145" width="2" height="2" fill="#000000"/><rect x="2032" y="145" width="8" height="2" fill="#ffffff"/><rect x="2040" y="145" width="2" height="2" fill="#0000ff"/><rect x="2042" y="145" width="8" height="2" fill="#ffffff"/><rect x="2050" y="145" width="2" height="2" fill="#000000"/><rect x="2052" y="145" width="4" height="2" fill="#ffffff"/><rect x="2056" y="145" width="2" height="2" fill="#000000"/><rect x="2030" y="147" width="2" height="2" fill="#000000"/><rect x="2032" y="147" width="4" height="2" fill="#ffffff"/><rect x="2036" y="147" width="10" height="2" fill="#0000ff"/><rect x="2046" y="147" width="4" height="2" fill="#ffffff"/><rect x="2050" y="147" width="2" height="2" fill="#000000"/><rect x="2052" y="147" width="4" height="2" fill="#ffffff"/><rect x="2056" y="147" width="2" height="2" fill="#000000"/><rect x="2032" y="149" width="2" height="2" fill="#000000"/><rect x="2034" y="149" width="4" height="2" fill="#ffffff"/><rect x="2038" y="149" width="6" height="2" fill="#0000ff"/><rect x="2044" y="149" width="4" height="2" fill="#ffffff"/><rect x="2048" y="149" width="2" height="2" fill="#000000"/><rect x="2050" y="149" width="6" height="2" fill="#ffffff"/><rect x="2056" y="149" width="2" height="2" fill="#000000"/><rect x="2032" y="151" width="2" height="2" fill="#000000"/><rect x="2034" y="151" width="6" height="2" fill="#ffffff"/><rect x="2040" y="151" width="2" height="2" fill="#0000ff"/><rect x="2042" y="151" width="6" height="2" fill="#ffffff"/><rect x="2048" y="151" width="4" height="2" fill="#000000"/><rect x="2052" y="151" width="4" height="2" fill="#ffffff"/><rect x="2056" y="151" width="2" height="2" fill="#000000"/><rect x="2034" y="153" width="4" height="2" fill="#000000"/><rect x="2038" y="153" width="6" height="2" fill="#ffffff"/><rect x="2044" y="153" width="4" height="2" fill="#000000"/><rect x="2048" y="153" width="2" height="2" fill="#ffffff"/><rect x="2050" y="153" width="2" height="2" fill="#ffff00"/><rect x="2052" y="153" width="2" height="2" fill="#000000"/><rect x="2054" y="153" width="2" height="2" fill="#ffffff"/><rect x="2056" y="153" width="2" height="2" fill="#000000"/><rect x="2034" y="155" width="2" height="2" fill="#000000"/><rect x="2036" y="155" width="2" height="2" fill="#ffffff"/><rect x="2038" y="155" width="6" height="2" fill="#000000"/><rect x="2044" y="155" width="2" height="2" fill="#ffffff"/><rect x="2046" y="155" width="2" height="2" fill="#000000"/><rect x="2048" y="155" width="2" height="2" fill="#808000"/><rect x="2050" y="155" width="2" height="2" fill="#ffffff"/><rect x="2052" y="155" width="2" height="2" fill="#ffff00"/><rect x="2054" y="155" width="4" height="2" fill="#000000"/><rect x="2034" y="157" width="2" height="2" fill="#000000"/><rect x="2036" y="157" width="12" height="2" fill="#ffffff"/><rect x="2048" y="157" width="2" height="2" fill="#000000"/><rect x="2050" y="157" width="2" height="2" fill="#808000"/><rect x="2052" y="157" width="2" height="2" fill="#ffffff"/><rect x="2054" y="157" width="2" height="2" fill="#ffff00"/><rect x="2056" y="157" width="2" height="2" fill="#000000"/><rect x="2034" y="159" width="18" height="2" fill="#000000"/><rect x="2052" y="159" width="2" height="2" fill="#808000"/><rect x="2054" y="159" width="2" height="2" fill="#ffffff"/><rect x="2056" y="159" width="2" height="2" fill="#ffff00"/><rect x="2058" y="159" width="2" height="2" fill="#000000"/><rect x="2052" y="161" width="2" height="2" fill="#000000"/><rect x="2054" y="161" width="2" height="2" fill="#808000"/><rect x="2056" y="161" width="2" height="2" fill="#000000"/>
<rect x="2090" y="135" width="2" height="2" fill="#000000"/><rect x="2086" y="137" width="4" height="2" fill="#000000"/><rect x="2090" y="137" width="2" height="2" fill="#ffffff"/><rect x="2092" y="137" width="2" height="2" fill="#000000"/><rect x="2084" y="139" width="2" height="2" fill="#000000"/><rect x="2086" y="139" width="2" height="2" fill="#ffffff"/><rect x="2088" y="139" width="2" height="2" fill="#000000"/><rect x="2090" y="139" width="2" height="2" fill="#ffffff"/><rect x="2092" y="139" width="2" height="2" fill="#000000"/><rect x="2084" y="141" width="2" height="2" fill="#000000"/><rect x="2086" y="141" width="2" height="2" fill="#ffffff"/><rect x="2088" y="141" width="2" height="2" fill="#000000"/><rect x="2090" y="141" width="2" height="2" fill="#ffffff"/><rect x="2092" y="141" width="2" height="2" fill="#000000"/><rect x="2084" y="143" width="2" height="2" fill="#000000"/><rect x="2086" y="143" width="2" height="2" fill="#ffffff"/><rect x="2088" y="143" width="2" height="2" fill="#000000"/><rect x="2090" y="143" width="2" height="2" fill="#ffffff"/><rect x="2092" y="143" width="2" height="2" fill="#000000"/><rect x="2078" y="145" width="4" height="2" fill="#000000"/><rect x="2084" y="145" width="2" height="2" fill="#000000"/><rect x="2086" y="145" width="2" height="2" fill="#ffffff"/><rect x="2088" y="145" width="2" height="2" fill="#000000"/><rect x="2090" y="145" width="2" height="2" fill="#ffffff"/><rect x="2092" y="145" width="2" height="2" fill="#000000"/><rect x="2078" y="147" width="2" height="2" fill="#000000"/><rect x="2080" y="147" width="2" height="2" fill="#ffffff"/><rect x="2082" y="147" width="4" height="2" fill="#000000"/><rect x="2086" y="147" width="8" height="2" fill="#ffffff"/><rect x="2080" y="149" width="2" height="2" fill="#000000"/><rect x="2082" y="149" width="2" height="2" fill="#ffffff"/><rect x="2084" y="149" width="2" height="2" fill="#000000"/><rect x="2086" y="149" width="8" height="2" fill="#ffffff"/><rect x="2080" y="151" width="2" height="2" fill="#000000"/><rect x="2082" y="151" width="12" height="2" fill="#ffffff"/><rect x="2080" y="153" width="4" height="2" fill="#000000"/><rect x="2084" y="153" width="10" height="2" fill="#ffffff"/><rect x="2082" y="155" width="2" height="2" fill="#000000"/><rect x="2084" y="155" width="10" height="2" fill="#ffffff"/><rect x="2084" y="157" width="2" height="2" fill="#000000"/><rect x="2086" y="157" width="8" height="2" fill="#ffffff"/><rect x="2086" y="159" width="2" height="2" fill="#000000"/><rect x="2088" y="159" width="6" height="2" fill="#ffffff"/><rect x="2086" y="161" width="8" height="2" fill="#000080"/><rect x="2086" y="163" width="8" height="2" fill="#000080"/>
</g>
<rect x="1168" y="23" width="926" height="1688" rx="15" fill="none" stroke="#a3a3a3" stroke-width="1.8"/>
<g><g fill="#073f80" stroke="#ffffff" stroke-width="3.2" stroke-linejoin="round" opacity="1"><rect x="1967" y="1676.3" width="10.8" height="3.8" rx="0"/>
<path d="M1967,1678 L1970.6,1678 L1970.6,1703 Q1970.6,1705 1968.6,1705 L1967,1705 Z"/>
<path d="M1972,1682.5 L1977.8,1682.5 L1977.8,1705 L1972,1705 Z M1974,1686 L1974,1702 L1975.6,1702 L1975.6,1686 Z"/>
<rect x="1985" y="1676.3" width="4" height="3.5" rx="0"/>
<rect x="1981.5" y="1678.6" width="14.3" height="3.3" rx="0"/>
<path d="M1979.5,1681 Q1979.5,1678.6 1982,1678.6 L1983.6,1678.6 L1983.6,1702.5 Q1983.6,1705 1981,1705 L1979.5,1705 Z"/>
<path d="M2001,1676.3 L2027,1676.3 L2027,1680 L2003,1680 L2003,1702.5 Q2003,1705 2000.5,1705 L1998.6,1705 L1998.6,1679 Q1998.6,1676.3 2001,1676.3 Z"/>
<path d="M2006,1683 L2025,1683 Q2027,1683 2027,1685 L2027,1705 L2006,1705 Z M2011,1687 L2011,1701 L2021.8,1701 L2021.8,1687 Z"/>
<path d="M2030.6,1677 L2034.2,1677 L2034.2,1697.7 L2037,1697.7 L2037,1701.9 L2032.5,1701.9 Q2030.6,1701.9 2030.6,1700 Z"/>
<rect x="2037" y="1676.3" width="4.6" height="28.6" rx="0"/>
<path d="M2045.8,1676.3 L2051.2,1676.3 L2047.8,1685.2 L2043.2,1685.2 Z"/>
<path d="M2049.5,1679.8 L2056.8,1679.8 Q2059.8,1680 2058.8,1683.5 L2048.8,1705 L2043.6,1705 L2053.3,1683.6 L2048.2,1683.6 Z"/>
<path d="M2043.6,1686.9 L2049.8,1686.9 L2058.9,1705 L2053.5,1705 L2046.2,1689.9 L2043.6,1689.9 Z"/>
<rect x="2074" y="1676.3" width="4.9" height="2.5" rx="0"/>
<rect x="2062.3" y="1678" width="27.6" height="3.4" rx="0"/>
<path d="M2064.8,1681 L2070.7,1681 A5.85,4.9 0 0 0 2082.4,1681 L2088,1681 L2086,1686.2 L2066.8,1686.2 Z"/>
<rect x="2061.8" y="1686" width="28.6" height="3.3" rx="0"/>
<path d="M2065,1691.1 L2087,1691.1 Q2089,1691.1 2089,1693 L2089,1705 L2062.8,1705 L2062.8,1693 Q2062.8,1691.1 2065,1691.1 Z M2067.8,1695.2 L2067.8,1697.8 L2084.8,1697.8 L2084.8,1695.2 Z M2067.8,1700.2 L2067.8,1702 L2084.8,1702 L2084.8,1700.2 Z"/>
<rect x="2093.5" y="1679.1" width="12" height="2.6" rx="0"/>
<rect x="2097.9" y="1676.3" width="4.7" height="28.6" rx="0"/>
<path d="M2093.5,1684 L2095.6,1684 L2095.6,1701 Q2095.6,1702.5 2093.5,1702.5 Z"/>
<ellipse cx="2104.7" cy="1692" rx="1.3" ry="6"/>
<path d="M2110,1676.8 L2118.5,1676.8 Q2120.6,1676.8 2120.6,1679 L2120.6,1701 L2122.3,1702.5 L2122.3,1705 L2118.5,1705 Q2116.2,1705 2116.2,1703 L2116.2,1681.3 L2112.2,1681.3 L2112.2,1705 L2107.7,1705 L2107.7,1679 Q2107.7,1676.8 2110,1676.8 Z"/></g>
<g fill="#073f80"><rect x="1967" y="1676.3" width="10.8" height="3.8" rx="0"/>
<path d="M1967,1678 L1970.6,1678 L1970.6,1703 Q1970.6,1705 1968.6,1705 L1967,1705 Z"/>
<path d="M1972,1682.5 L1977.8,1682.5 L1977.8,1705 L1972,1705 Z M1974,1686 L1974,1702 L1975.6,1702 L1975.6,1686 Z"/>
<rect x="1985" y="1676.3" width="4" height="3.5" rx="0"/>
<rect x="1981.5" y="1678.6" width="14.3" height="3.3" rx="0"/>
<path d="M1979.5,1681 Q1979.5,1678.6 1982,1678.6 L1983.6,1678.6 L1983.6,1702.5 Q1983.6,1705 1981,1705 L1979.5,1705 Z"/>
<path d="M2001,1676.3 L2027,1676.3 L2027,1680 L2003,1680 L2003,1702.5 Q2003,1705 2000.5,1705 L1998.6,1705 L1998.6,1679 Q1998.6,1676.3 2001,1676.3 Z"/>
<path d="M2006,1683 L2025,1683 Q2027,1683 2027,1685 L2027,1705 L2006,1705 Z M2011,1687 L2011,1701 L2021.8,1701 L2021.8,1687 Z"/>
<path d="M2030.6,1677 L2034.2,1677 L2034.2,1697.7 L2037,1697.7 L2037,1701.9 L2032.5,1701.9 Q2030.6,1701.9 2030.6,1700 Z"/>
<rect x="2037" y="1676.3" width="4.6" height="28.6" rx="0"/>
<path d="M2045.8,1676.3 L2051.2,1676.3 L2047.8,1685.2 L2043.2,1685.2 Z"/>
<path d="M2049.5,1679.8 L2056.8,1679.8 Q2059.8,1680 2058.8,1683.5 L2048.8,1705 L2043.6,1705 L2053.3,1683.6 L2048.2,1683.6 Z"/>
<path d="M2043.6,1686.9 L2049.8,1686.9 L2058.9,1705 L2053.5,1705 L2046.2,1689.9 L2043.6,1689.9 Z"/>
<rect x="2074" y="1676.3" width="4.9" height="2.5" rx="0"/>
<rect x="2062.3" y="1678" width="27.6" height="3.4" rx="0"/>
<path d="M2064.8,1681 L2070.7,1681 A5.85,4.9 0 0 0 2082.4,1681 L2088,1681 L2086,1686.2 L2066.8,1686.2 Z"/>
<rect x="2061.8" y="1686" width="28.6" height="3.3" rx="0"/>
<path d="M2065,1691.1 L2087,1691.1 Q2089,1691.1 2089,1693 L2089,1705 L2062.8,1705 L2062.8,1693 Q2062.8,1691.1 2065,1691.1 Z M2067.8,1695.2 L2067.8,1697.8 L2084.8,1697.8 L2084.8,1695.2 Z M2067.8,1700.2 L2067.8,1702 L2084.8,1702 L2084.8,1700.2 Z"/>
<rect x="2093.5" y="1679.1" width="12" height="2.6" rx="0"/>
<rect x="2097.9" y="1676.3" width="4.7" height="28.6" rx="0"/>
<path d="M2093.5,1684 L2095.6,1684 L2095.6,1701 Q2095.6,1702.5 2093.5,1702.5 Z"/>
<ellipse cx="2104.7" cy="1692" rx="1.3" ry="6"/>
<path d="M2110,1676.8 L2118.5,1676.8 Q2120.6,1676.8 2120.6,1679 L2120.6,1701 L2122.3,1702.5 L2122.3,1705 L2118.5,1705 Q2116.2,1705 2116.2,1703 L2116.2,1681.3 L2112.2,1681.3 L2112.2,1705 L2107.7,1705 L2107.7,1679 Q2107.7,1676.8 2110,1676.8 Z"/></g>
<text x="1966" y="1726.7" font-family="Liberation Sans" font-weight="bold" font-size="17.5" fill="#073f80" stroke="#ffffff" stroke-width="3" stroke-linejoin="round" textLength="158" lengthAdjust="spacingAndGlyphs">www.crystalradio.cn</text>
<text x="1966" y="1726.7" font-family="Liberation Sans" font-weight="bold" font-size="17.5" fill="#073f80" textLength="158" lengthAdjust="spacingAndGlyphs">www.crystalradio.cn</text></g>
</svg>
</body></html>
